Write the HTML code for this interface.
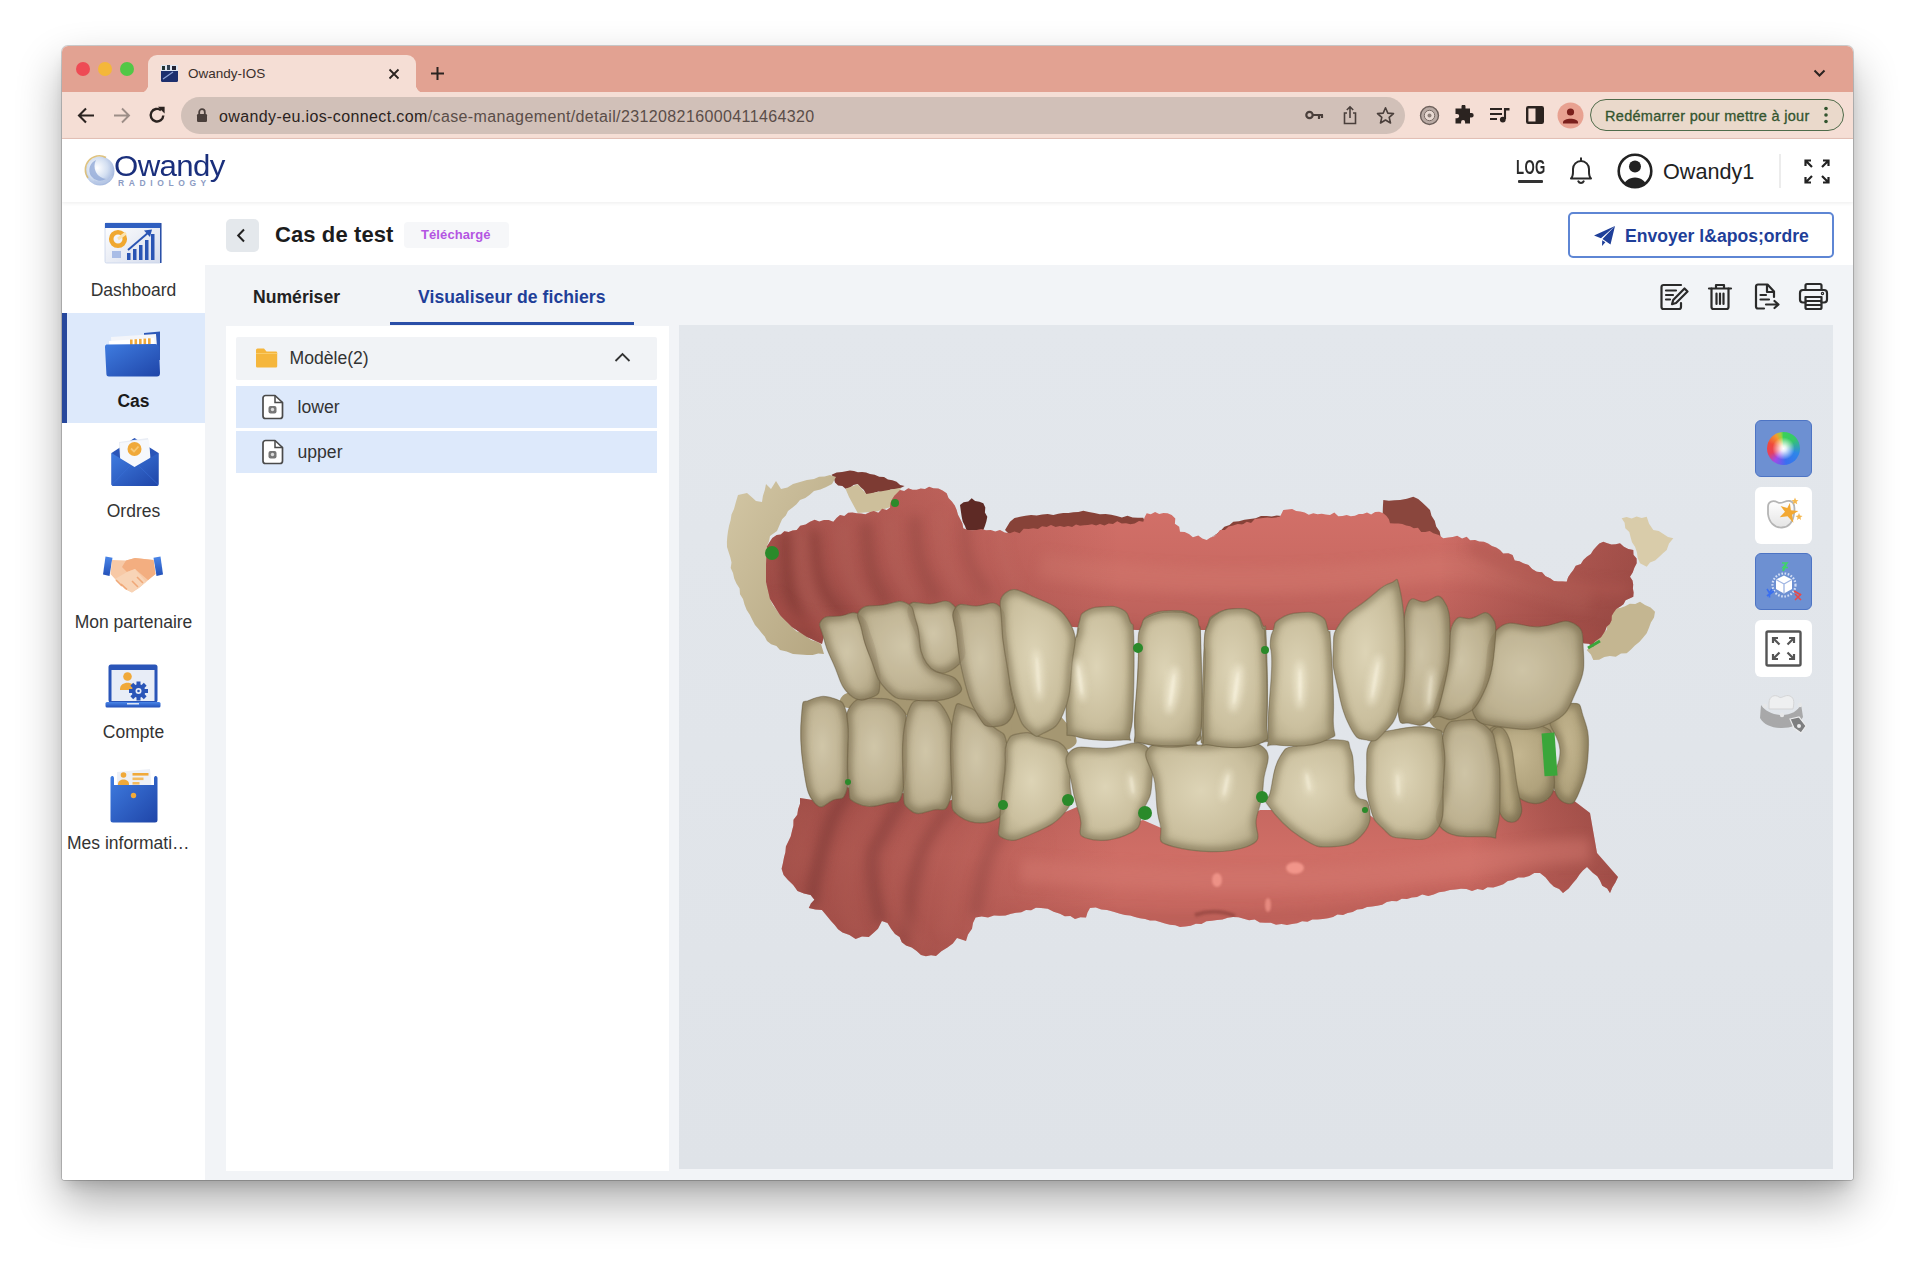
<!DOCTYPE html>
<html lang="fr">
<head>
<meta charset="utf-8">
<title>Owandy-IOS</title>
<style>
*{box-sizing:border-box;margin:0;padding:0}
html,body{width:1920px;height:1266px;overflow:hidden;background:#fff}
body{font-family:"Liberation Sans",Arial,sans-serif;color:#222;position:relative}
.abs{position:absolute}
#win{position:absolute;left:62px;top:46px;width:1791px;height:1134px;background:#fff;border-radius:6px 6px 3px 3px;
 box-shadow:0 0 0 1px rgba(0,0,0,.18),0 22px 45px 0 rgba(0,0,0,.32),0 8px 14px -4px rgba(0,0,0,.15);overflow:hidden}
/* ---- browser chrome ---- */
#tabbar{position:absolute;left:0;top:0;width:100%;height:47px;background:#e2a292}
#tab{position:absolute;left:86px;top:9px;width:268px;height:38px;background:#f5ded5;border-radius:9px 9px 0 0}
#tab:before,#tab:after{content:"";position:absolute;bottom:0;width:9px;height:9px}
#tab:before{left:-9px;background:radial-gradient(circle at 0 0,rgba(0,0,0,0) 9px,#f5ded5 9.5px)}
#tab:after{right:-9px;background:radial-gradient(circle at 100% 0,rgba(0,0,0,0) 9px,#f5ded5 9.5px)}
.tl{position:absolute;top:16px;width:14px;height:14px;border-radius:50%}
#toolbar{position:absolute;left:0;top:46px;width:100%;height:47px;background:#f5ded5;border-bottom:1px solid #e6c3b8}
#omni{position:absolute;left:119px;top:5px;width:1224px;height:37px;border-radius:19px;background:#d1c0b8}
#url{position:absolute;left:38px;top:10.5px;font-size:16px;color:#5a4d48;white-space:nowrap;letter-spacing:.38px}
#url b{font-weight:normal;color:#2b2320}
#pill{position:absolute;left:1528px;top:7px;width:254px;height:32px;border-radius:16px;border:1.5px solid #4f6b4a;background:#ead9cb}
#pill span{position:absolute;left:14px;top:7.5px;letter-spacing:.3px;font-size:14.5px;color:#33552f;white-space:nowrap;-webkit-text-stroke:.3px #33552f}
/* ---- app ---- */
#app{position:absolute;left:0;top:93px;width:1791px;height:1041px;background:#f2f4f7}
#hdr{position:absolute;left:0;top:0;width:100%;height:63px;background:#fff;box-shadow:0 1px 4px rgba(0,0,0,.08);z-index:3}
#side{position:absolute;left:0;top:63px;width:143px;height:978px;background:#fff;z-index:2}
.nav{position:absolute;left:0;width:143px;height:110.6px;text-align:center}
.nav .lb{position:absolute;left:0;width:143px;top:78px;font-size:17.5px;color:#333;white-space:nowrap}
.nav.act{background:#dde9fb}
.nav.act:before{content:"";position:absolute;left:0;top:0;width:5px;height:100%;background:#27489c}
.nav.act .lb{font-weight:bold;color:#1a1a1a}
.nav svg{position:absolute}
#titlerow{position:absolute;left:143px;top:63px;width:1648px;height:63px;background:#fff}
#fpanel{position:absolute;left:164px;top:187px;width:443px;height:845px;background:#fff}
#viewer{position:absolute;left:617px;top:186px;width:1154px;height:844px;background:linear-gradient(#e3e7ec,#dfe3e8);overflow:hidden}
.vbtn{position:absolute;left:1076px;width:57px;height:57px;border-radius:6px;background:#fff}
.vbtn.on{background:#6d90d2;border:1.5px solid #4d74c4}
</style>
</head>
<body>
<div id="win">
 <!-- TABBAR -->
 <div id="tabbar">
  <div class="tl" style="left:14px;background:#ee4b55"></div>
  <div class="tl" style="left:36px;background:#f4b73a"></div>
  <div class="tl" style="left:58px;background:#52c746"></div>
  <div id="tab">
   <svg class="abs" style="left:13px;top:10px" width="17" height="17" viewBox="0 0 17 17"><rect x="0" y="0" width="17" height="17" rx="1.5" fill="#1d2f6e"/><rect x="0" y="0" width="17" height="6" fill="#dfe6f3"/><rect x="1" y="1" width="3" height="4" fill="#233"/><rect x="6" y="0" width="3" height="5" fill="#345"/><rect x="11" y="1" width="4" height="4" fill="#223"/><path d="M2 14 L12 7" stroke="#8fa4d8" stroke-width="1.2"/></svg>
   <div class="abs" style="left:40px;top:11px;font-size:13.5px;color:#3b2f2b;white-space:nowrap">Owandy-IOS</div>
   <svg class="abs" style="left:240px;top:13px" width="12" height="12" viewBox="0 0 12 12"><path d="M1.5 1.5 L10.5 10.5 M10.5 1.5 L1.5 10.5" stroke="#2b2320" stroke-width="1.8"/></svg>
  </div>
  <svg class="abs" style="left:368px;top:20px" width="15" height="15" viewBox="0 0 15 15"><path d="M7.5 1 V14 M1 7.5 H14" stroke="#2b2320" stroke-width="2"/></svg>
  <svg class="abs" style="left:1751px;top:23px" width="13" height="9" viewBox="0 0 13 9"><path d="M1.5 1.5 L6.5 6.5 L11.5 1.5" fill="none" stroke="#2b2320" stroke-width="2"/></svg>
 </div>
 <!-- TOOLBAR -->
 <div id="toolbar">
  <svg class="abs" style="left:15px;top:15px" width="18" height="17" viewBox="0 0 18 17"><path d="M17 8.5 H2.5 M9 1.5 L2 8.5 L9 15.5" fill="none" stroke="#2b2320" stroke-width="2.1"/></svg>
  <svg class="abs" style="left:51px;top:15px" width="18" height="17" viewBox="0 0 18 17"><path d="M1 8.5 H15.5 M9 1.5 L16 8.5 L9 15.5" fill="none" stroke="#9c8d87" stroke-width="1.9"/></svg>
  <svg class="abs" style="left:86px;top:14px" width="18" height="18" viewBox="0 0 18 18"><path d="M15.3 9.5 A6.3 6.3 0 1 1 13 4.300" fill="none" stroke="#2b2320" stroke-width="2.400"/><path d="M9.800 .8 H16.600 V7.600 Z" fill="#2b2320"/></svg>
  <div id="omni">
   <svg class="abs" style="left:15px;top:11px" width="12" height="15" viewBox="0 0 12 15"><rect x="1" y="6" width="10" height="8" rx="1.2" fill="#4a3f3b"/><path d="M3.2 6 V4 A2.8 2.8 0 0 1 8.8 4 V6" fill="none" stroke="#4a3f3b" stroke-width="1.8"/></svg>
   <div id="url"><b>owandy-eu.ios-connect.com</b>/case-management/detail/231208216000411464320</div>
   <!-- key -->
   <svg class="abs" style="left:1124px;top:12px" width="19" height="13" viewBox="0 0 19 13"><circle cx="4.5" cy="6" r="3.2" fill="none" stroke="#4a3f3b" stroke-width="2.2"/><path d="M8 6 H18 M14 6 V10 M17 6 V9" stroke="#4a3f3b" stroke-width="2.2" fill="none"/></svg>
   <!-- share -->
   <svg class="abs" style="left:1162px;top:8px" width="14" height="20" viewBox="0 0 14 20"><path d="M4 8 H1.5 V18.5 H12.5 V8 H10" fill="none" stroke="#4a3f3b" stroke-width="1.6"/><path d="M7 13 V2 M3.8 5 L7 1.8 L10.2 5" fill="none" stroke="#4a3f3b" stroke-width="1.6"/></svg>
   <!-- star -->
   <svg class="abs" style="left:1195px;top:9px" width="19" height="19" viewBox="0 0 19 19"><path d="M9.5 1.8 L11.8 7.1 L17.5 7.6 L13.2 11.4 L14.5 17 L9.5 14 L4.5 17 L5.8 11.4 L1.5 7.6 L7.2 7.1 Z" fill="none" stroke="#4a3f3b" stroke-width="1.6" stroke-linejoin="round"/></svg>
  </div>
  <!-- ext icons -->
  <svg class="abs" style="left:1357px;top:13px" width="21" height="21" viewBox="0 0 21 21"><circle cx="10.5" cy="10.5" r="9" fill="#b9aaa4" stroke="#6d605b" stroke-width="1.4"/><circle cx="10.5" cy="10.5" r="5.2" fill="#e9dad3" stroke="#7a6c66" stroke-width="1"/><circle cx="10.5" cy="10.5" r="2" fill="#8d7f79"/></svg>
  <svg class="abs" style="left:1392px;top:13px" width="20" height="20" viewBox="0 0 20 20"><path d="M8 1.5 a2 2 0 0 1 4 0 V3.5 H16.5 V8 H18 a2 2 0 0 1 0 4.4 H16.5 V18.5 H11.6 V17 a2 2 0 0 0 -4 0 V18.5 H2 V13.2 H3.6 a2 2 0 0 0 0 -4.2 H2 V3.5 H8 Z" fill="#2b2320" transform="translate(-.5,0)"/></svg>
  <svg class="abs" style="left:1427px;top:14px" width="21" height="18" viewBox="0 0 21 18"><path d="M1 3 H13 M1 8 H13 M1 13 H8" stroke="#2b2320" stroke-width="2.1"/><path d="M16 2 V13" stroke="#2b2320" stroke-width="2.1"/><path d="M16 2 H20.5 V4.6 H16" fill="#2b2320"/><circle cx="13.8" cy="13.6" r="2.9" fill="#2b2320"/></svg>
  <svg class="abs" style="left:1464px;top:14px" width="18" height="18" viewBox="0 0 18 18"><rect x="1.2" y="1.2" width="15.6" height="15.6" rx="1" fill="none" stroke="#2b2320" stroke-width="2.4"/><rect x="9.5" y="1.2" width="7.3" height="15.6" fill="#2b2320"/></svg>
  <svg class="abs" style="left:1495px;top:10px" width="27" height="27" viewBox="0 0 27 27"><circle cx="13.5" cy="13.5" r="13" fill="#e8a191"/><circle cx="13.5" cy="10" r="3.6" fill="#7a1f1c"/><path d="M6 20.5 C6 15.5 21 15.5 21 20.5 V21.5 H6 Z" fill="#7a1f1c"/></svg>
  <div id="pill"><span>Redémarrer pour mettre à jour</span>
   <svg class="abs" style="left:232px;top:6px" width="6" height="18" viewBox="0 0 6 18"><circle cx="3" cy="2.5" r="1.8" fill="#33552f"/><circle cx="3" cy="9" r="1.8" fill="#33552f"/><circle cx="3" cy="15.5" r="1.8" fill="#33552f"/></svg>
  </div>
 </div>
 <!-- APP -->
 <div id="app">
  <div id="hdr">
   <svg class="abs" style="left:20px;top:13px" width="36" height="36" viewBox="0 0 36 36">
    <defs><radialGradient id="orb" cx=".4" cy=".4" r=".6"><stop offset="0" stop-color="#fff"/><stop offset=".6" stop-color="#cfdcf0"/><stop offset="1" stop-color="#9fb4dc"/></radialGradient></defs>
    <circle cx="18" cy="19" r="14.5" fill="url(#orb)" opacity=".9"/>
    <path d="M6 26 A14 14 0 0 1 24 5.5" fill="none" stroke="#d9b86a" stroke-width="1.6" opacity=".85"/>
    <path d="M9 24 A11 11 0 0 1 14 8 A13 13 0 0 0 24 27 A11 11 0 0 1 9 24Z" fill="#8ea6d6" opacity=".75"/>
    <path d="M12 29 A13 13 0 0 0 30 24" fill="none" stroke="#b8c8e6" stroke-width="2" opacity=".8"/>
   </svg>
   <div class="abs" style="left:51.5px;top:9.5px;font-size:30px;color:#1a2f7c;letter-spacing:-.6px;transform-origin:0 0;transform:scale(1.04,1);white-space:nowrap">Owandy</div>
   <div class="abs" style="left:56px;top:39px;font-size:8.5px;color:#8c9bc3;letter-spacing:4.6px;white-space:nowrap;font-weight:bold">RADIOLOGY</div>
   <!-- LOG -->
   <div class="abs" style="left:1454px;top:18px;font-size:20px;line-height:20px;font-weight:bold;color:#2a2a2a;transform-origin:0 0;transform:scale(.66,1);white-space:nowrap;letter-spacing:.5px">LOG</div>
   <div class="abs" style="left:1456px;top:41px;width:25px;height:3px;background:#333;border-radius:1px"></div>
   <!-- bell -->
   <svg class="abs" style="left:1506px;top:17px" width="26" height="29" viewBox="0 0 26 29"><path d="M13 2.2 V4 M3 22.5 H23 C20.5 20 21 17 21 13 A8 8 0 0 0 5 13 C5 17 5.500 20 3 22.500 Z" fill="none" stroke="#2a2a2a" stroke-width="2" stroke-linejoin="round" stroke-linecap="round"/><path d="M10.3 25.3 A3 3 0 0 0 15.7 25.300" fill="none" stroke="#2a2a2a" stroke-width="2" stroke-linecap="round"/></svg>
   <!-- avatar -->
   <svg class="abs" style="left:1554px;top:13px" width="38" height="38" viewBox="0 0 38 38"><defs><clipPath id="avc"><circle cx="19" cy="19" r="16.3"/></clipPath></defs><circle cx="19" cy="19" r="16.3" fill="#fff" stroke="#222" stroke-width="2.6"/><circle cx="19" cy="14.5" r="6" fill="#222"/><path d="M7.5 36 C7.500 22 30.500 22 30.500 36 Z" fill="#222" clip-path="url(#avc)"/></svg>
   <div class="abs" style="left:1601px;top:20px;font-size:21.6px;line-height:25px;color:#222;white-space:nowrap">Owandy1</div>
   <div class="abs" style="left:1717px;top:15px;width:2px;height:34px;background:#ececec"></div>
   <!-- fullscreen -->
   <svg class="abs" style="left:1742px;top:20px" width="26" height="25" viewBox="0 0 26 25"><g fill="none" stroke="#222" stroke-width="2.2"><path d="M1.500 7 V1.500 H7 M2 2 L8 8"/><path d="M24.500 7 V1.500 H19 M24 2 L18 8"/><path d="M1.500 18 V23.500 H7 M2 23 L8 17"/><path d="M24.500 18 V23.500 H19 M24 23 L18 17"/></g></svg>
</div>
  <div id="side">
   <svg width="0" height="0" style="position:absolute"><defs>
    <linearGradient id="gb" x1="0" y1="0" x2="1" y2="1"><stop offset="0" stop-color="#3f7ce0"/><stop offset="1" stop-color="#1f45a8"/></linearGradient>
    <linearGradient id="gb2" x1="0" y1="0" x2="0" y2="1"><stop offset="0" stop-color="#4a86e8"/><stop offset="1" stop-color="#2350b8"/></linearGradient>
    <linearGradient id="gw" x1="0" y1="0" x2="1" y2="1"><stop offset="0" stop-color="#ffffff"/><stop offset="1" stop-color="#d5dcec"/></linearGradient>
   </defs></svg>
   <div class="nav" style="top:0.0px"><svg style="left:42px;top:20px" width="58" height="42" viewBox="0 0 58 42"><rect x="1" y="1" width="56" height="40" rx="1.500" fill="url(#gw)" stroke="#c8d3ea" stroke-width=".8"/><rect x="1" y="1" width="56" height="5" fill="#2f5fc0"/><rect x="56" y="1" width="1.500" height="40" fill="#2a50a8"/><circle cx="14" cy="17" r="6.800" fill="none" stroke="#f0a830" stroke-width="4.600"/><path d="M14 17 L22 11" stroke="#fbe3b0" stroke-width="3"/><rect x="8" y="29" width="9" height="7" fill="#a9bde6"/><g fill="#2a55b4"><rect x="23" y="31" width="3.500" height="7"/><rect x="29" y="27" width="3.500" height="11"/><rect x="35" y="23" width="3.500" height="15"/><rect x="41" y="18" width="3.500" height="20"/><rect x="47" y="12" width="3.500" height="26"/></g><path d="M24 28 L45 10" stroke="#2a55b4" stroke-width="2"/><path d="M40 8.500 L48 7.500 L46 15 Z" fill="#2a55b4"/></svg><div class="lb">Dashboard</div></div>
   <div class="nav act" style="top:110.6px"><svg style="left:42px;top:17px" width="58" height="48" viewBox="0 0 58 48"><path d="M40 3 L56 1.500 L56 30 L40 30 Z" fill="#2c58b8"/><path d="M7 7 L52 4 L54 30 L8 30 Z" fill="#f3f5fa"/><path d="M5 11 L50 8 L52 30 L6 30 Z" fill="#ffffff"/><g fill="#f0a93a"><rect x="26" y="9.500" width="2.600" height="6"/><rect x="30.500" y="9.200" width="2.600" height="6"/><rect x="35" y="8.900" width="2.600" height="6"/><rect x="39.500" y="8.600" width="2.600" height="6"/><rect x="44" y="8.300" width="2.600" height="6"/></g><path d="M1 17 C1 15 2 14.500 3.500 14.500 L50 14 C54 14 55 16 55 18 L56 43 C56 45.500 55 46.500 53 46.500 L5 46.500 C3 46.500 2.500 45.500 2.400 44 Z" fill="url(#gb)"/></svg><div class="lb">Cas</div></div>
   <div class="nav" style="top:221.2px"><svg style="left:48px;top:13px" width="50" height="52" viewBox="0 0 50 52"><path d="M1.500 17 L24.500 2 L48.500 17 V48 A2 2 0 0 1 46.500 50 H3.500 A2 2 0 0 1 1.500 48 Z" fill="#2a55b8"/><path d="M9 6 L38 2 L41 33 L11 36 Z" fill="#e9edf5"/><path d="M10 7 L39 3.500 L41 30 L11 33 Z" fill="#f6f8fc"/><circle cx="24.500" cy="13" r="7" fill="#f0a93a"/><path d="M21 12.500 L24 15.500 L28.500 10.500" fill="none" stroke="#f7c976" stroke-width="1.800"/><path d="M1.500 17 L24.500 31 L48.500 17 V48 A2 2 0 0 1 46.500 50 H3.500 A2 2 0 0 1 1.500 48 Z" fill="url(#gb)"/><path d="M1.500 49 L20 30 M48.500 49 L29 30" stroke="#3a6fd6" stroke-width="1" opacity=".6"/></svg><div class="lb">Ordres</div></div>
   <div class="nav" style="top:331.8px"><svg style="left:40px;top:21px" width="62" height="40" viewBox="0 0 62 40"><path d="M3.500 1.500 L10.500 2.800 L7.500 21 L1 19.500 Z" fill="url(#gb2)"/><path d="M51.500 2.800 L58.500 1.500 L61 19.500 L54.500 21 Z" fill="url(#gb2)"/><path d="M10 5 L24 5.500 L33 3 L42 4 L51.500 5 L53.500 19 L44 27 L37 33 L30 37.500 L23 34 L13 24 L8.500 19 Z" fill="#f7c9a6"/><path d="M24 5.500 L33 3 L51.500 5 L53.500 19 L46 25 L33 14 L25 17 L20 12 Z" fill="#f3ae80"/><path d="M13 24 L25 17 L33 14 L44 27 L30 37.500 L23 34 Z" fill="#f8d4b6"/><path d="M14 25 L20 31 M19 29 L25 34.500 M36 32 L30 26 M41 28 L35 22" stroke="#f0a878" stroke-width="1.600"/></svg><div class="lb">Mon partenaire</div></div>
   <div class="nav" style="top:442.4px"><svg style="left:42px;top:19px" width="58" height="46" viewBox="0 0 58 46"><rect x="4.500" y="1.500" width="49" height="38" rx="2.500" fill="#2a55b8"/><rect x="7.500" y="7" width="43" height="31" fill="#e8edf7"/><rect x="1.500" y="39" width="55" height="5.500" rx="1.500" fill="url(#gb2)"/><path d="M23 40 H35 V41.500 H23 Z" fill="#dfe6f4"/><circle cx="23.500" cy="13.500" r="4.300" fill="#f0a93a"/><path d="M16 26 C16 17.500 31 17.500 31 26 V27 H16 Z" fill="#f0a93a"/><g transform="translate(34.500,28)"><circle r="6.800" fill="#2a55b8"/><g fill="#2a55b8"><rect x="-2" y="-9.500" width="4" height="19"/><rect x="-2" y="-9.500" width="4" height="19" transform="rotate(45)"/><rect x="-2" y="-9.500" width="4" height="19" transform="rotate(90)"/><rect x="-2" y="-9.500" width="4" height="19" transform="rotate(135)"/></g><circle r="3" fill="#e8edf7"/><circle r="1.300" fill="#2a55b8"/></g></svg><div class="lb">Compte</div></div>
   <div class="nav" style="top:553.0px"><svg style="left:47px;top:13px" width="50" height="56" viewBox="0 0 50 56"><path d="M8 4 L41 1 L43 24 L8 24 Z" fill="#edf0f6"/><circle cx="14.500" cy="7" r="2.800" fill="#f0a93a"/><path d="M9 16 C9 10 20 10 20 16 V17 H9 Z" fill="#f0a93a"/><rect x="23.500" y="5" width="16" height="2.600" fill="#f0a93a"/><rect x="23.500" y="9.500" width="11" height="2.600" fill="#f3bb60"/><rect x="23.500" y="14" width="7" height="2.600" fill="#f3bb60"/><path d="M1.500 10 C1.500 8 4.500 7 5 10 L5 17 H45 L45 10 C45.500 7 48.500 8 48.500 10 V52 A2.500 2.500 0 0 1 46 54.500 H4 A2.500 2.500 0 0 1 1.500 52 Z" fill="url(#gb)"/><circle cx="24.500" cy="27.500" r="2.700" fill="#f0a93a"/></svg><div class="lb" style="left:5px;width:133px;text-align:left;overflow:hidden">Mes informati…</div></div>
</div>
  <div id="titlerow">
   <div class="abs" style="left:21px;top:17px;width:33px;height:33px;border-radius:5px;background:#e4e8ec"></div>
   <svg class="abs" style="left:31px;top:26px" width="10" height="15" viewBox="0 0 10 15"><path d="M8 1.500 L2.200 7.500 L8 13.500" fill="none" stroke="#222" stroke-width="2"/></svg>
   <div class="abs" style="left:70px;top:20px;font-size:22px;line-height:26px;font-weight:bold;color:#1c1c1c;white-space:nowrap;letter-spacing:.1px">Cas de test</div>
   <div class="abs" style="left:199px;top:20px;width:105px;height:26px;border-radius:4px;background:#f6f7f9"></div>
   <div class="abs" style="left:216px;top:25px;font-size:13px;line-height:16px;font-weight:bold;color:#b455e2;white-space:nowrap;letter-spacing:.1px">Téléchargé</div>
   <div class="abs" style="left:1363px;top:10px;width:266px;height:46px;border-radius:5px;border:2px solid #5e86d4;background:#fff"></div>
   <svg class="abs" style="left:1388px;top:23px" width="23" height="22" viewBox="0 0 23 22"><path d="M22 1 L1 10.500 L8 13.200 Z M22 1 L9.500 14 L17.500 19.500 Z M9.200 15.200 L9 21 L12.400 17.300 Z" fill="#1f3f99"/></svg>
   <div class="abs" style="left:1420px;top:23px;font-size:17.6px;line-height:22px;font-weight:bold;color:#1f3f99;white-space:nowrap">Envoyer l&amp;apos;ordre</div>
</div>
  
  <div class="abs" style="left:191px;top:147px;font-size:17.6px;line-height:22px;font-weight:bold;color:#222;white-space:nowrap">Numériser</div>
  <div class="abs" style="left:356px;top:147px;font-size:17.6px;line-height:22px;font-weight:bold;color:#1f3f99;white-space:nowrap;letter-spacing:.05px">Visualiseur de fichiers</div>
  <div class="abs" style="left:328px;top:183px;width:244px;height:3px;background:#2a4fa8;z-index:2"></div>
  <!-- action icons -->
  <svg class="abs" style="left:1597px;top:143px" width="30" height="29" viewBox="0 0 30 29"><g fill="none" stroke="#2a2a2a" stroke-width="2.2" stroke-linejoin="round" stroke-linecap="round"><path d="M22 3 H4.500 A2 2 0 0 0 2.500 5 V25 A2 2 0 0 0 4.500 27 H20 A2 2 0 0 0 22 25 V21"/><path d="M7 8.500 H17 M7 13 H14 M7 17.500 H11"/><path d="M25.500 6.500 L28.500 9.500 L17 21 L13 22.200 L14.200 18 Z"/></g></svg>
  <svg class="abs" style="left:1645px;top:143px" width="26" height="29" viewBox="0 0 26 29"><g fill="none" stroke="#2a2a2a" stroke-width="2.2" stroke-linejoin="round" stroke-linecap="round"><path d="M2 6.500 H24 M9 6 V3 H17 V6"/><path d="M4.500 6.500 V25 A2 2 0 0 0 6.500 27 H19.500 A2 2 0 0 0 21.500 25 V6.500"/><path d="M9.500 11.500 V22 M13 11.500 V22 M16.500 11.500 V22"/></g></svg>
  <svg class="abs" style="left:1691px;top:143px" width="28" height="29" viewBox="0 0 28 29"><g fill="none" stroke="#2a2a2a" stroke-width="2.2" stroke-linejoin="round" stroke-linecap="round"><path d="M21 15 V9.500 L14.500 2.500 H5 A2 2 0 0 0 3 4.500 V24.500 A2 2 0 0 0 5 26.500 H11"/><path d="M14 3 V10 H20.500"/><path d="M7.500 13 H13 M7.500 17.500 H16 M13 22.500 H25 M21.500 19 L25.500 22.500 L21.500 26"/></g></svg>
  <svg class="abs" style="left:1736px;top:143px" width="31" height="29" viewBox="0 0 31 29"><g fill="none" stroke="#2a2a2a" stroke-width="2.2" stroke-linejoin="round" stroke-linecap="round"><path d="M7.500 8 V3.500 A1.500 1.500 0 0 1 9 2 H22 A1.500 1.500 0 0 1 23.500 3.500 V8"/><path d="M7.500 20.500 H5 A3 3 0 0 1 2 17.500 V11 A3 3 0 0 1 5 8 H26 A3 3 0 0 1 29 11 V17.500 A3 3 0 0 1 26 20.500 H23.500"/><path d="M7.500 15 H23.500 V25.500 A1.500 1.500 0 0 1 22 27 H9 A1.500 1.500 0 0 1 7.500 25.500 Z M7.500 19 H23.500 M7.500 23 H23.500"/><circle cx="24.500" cy="11.500" r=".6"/></g></svg>

  <div id="fpanel">
   <div class="abs" style="left:10px;top:11px;width:421px;height:43px;background:#f1f3f6;border-radius:2px"></div>
   <svg class="abs" style="left:29px;top:21px" width="23" height="22" viewBox="0 0 23 22"><path d="M1 3 A1.500 1.500 0 0 1 2.500 1.500 H9 L11.500 4.500 H21 A1.200 1.200 0 0 1 22.200 5.700 V19.300 A1.200 1.200 0 0 1 21 20.500 H2.200 A1.200 1.200 0 0 1 1 19.300 Z" fill="#f5b63c"/><path d="M1 6.500 H22.200" stroke="#f9cc6a" stroke-width="1"/></svg>
   <div class="abs" style="left:63.500px;top:21px;font-size:17.6px;line-height:22px;color:#333;white-space:nowrap">Modèle(2)</div>
   <svg class="abs" style="left:388px;top:26px" width="17" height="11" viewBox="0 0 17 11"><path d="M1.500 9 L8.500 2 L15.500 9" fill="none" stroke="#333" stroke-width="1.800"/></svg>
   <div class="abs" style="left:10px;top:60px;width:421px;height:42px;background:#dde9fb"></div>
   <div class="abs" style="left:10px;top:104.500px;width:421px;height:42.500px;background:#dde9fb"></div>
   <svg class="abs" style="left:35px;top:68px" width="23" height="26" viewBox="0 0 23 26"><path d="M4.500 1.500 H14 L21.500 8.500 V22 A2.500 2.500 0 0 1 19 24.500 H4.500 A2.500 2.500 0 0 1 2 22 V4 A2.500 2.500 0 0 1 4.500 1.500 Z" fill="#fff" stroke="#4a4a4a" stroke-width="1.700" stroke-linejoin="round"/><path d="M14 1.500 V8.500 H21.500" fill="none" stroke="#4a4a4a" stroke-width="1.500"/><rect x="7.500" y="12" width="8" height="7.500" rx="2" fill="#777"/><circle cx="11.500" cy="15.500" r="1.700" fill="#ddd"/></svg>
   <svg class="abs" style="left:35px;top:112.500px" width="23" height="26" viewBox="0 0 23 26"><path d="M4.500 1.500 H14 L21.500 8.500 V22 A2.500 2.500 0 0 1 19 24.500 H4.500 A2.500 2.500 0 0 1 2 22 V4 A2.500 2.500 0 0 1 4.500 1.500 Z" fill="#fff" stroke="#4a4a4a" stroke-width="1.700" stroke-linejoin="round"/><path d="M14 1.500 V8.500 H21.500" fill="none" stroke="#4a4a4a" stroke-width="1.500"/><rect x="7.500" y="12" width="8" height="7.500" rx="2" fill="#777"/><circle cx="11.500" cy="15.500" r="1.700" fill="#ddd"/></svg>
   <div class="abs" style="left:71.500px;top:70px;font-size:17.6px;line-height:22px;color:#333;white-space:nowrap">lower</div>
   <div class="abs" style="left:71.500px;top:114.500px;font-size:17.6px;line-height:22px;color:#333;white-space:nowrap">upper</div>
</div>
  <div id="viewer"><!--V0--><svg class="abs" style="left:0;top:0" width="1154" height="844" viewBox="679 325 1154 844">
<defs>
 <radialGradient id="tg" cx=".45" cy=".45" r=".75"><stop offset="0" stop-color="#ddd4b6"/><stop offset=".55" stop-color="#cbc09f"/><stop offset="1" stop-color="#a89d7b"/></radialGradient>
 <radialGradient id="tgd" cx=".45" cy=".4" r=".8"><stop offset="0" stop-color="#c4b690"/><stop offset=".6" stop-color="#b0a27c"/><stop offset="1" stop-color="#877a5a"/></radialGradient>
 <linearGradient id="ugg" x1="0" y1="0" x2="0" y2="1"><stop offset="0" stop-color="#d5726a"/><stop offset=".5" stop-color="#ca6a63"/><stop offset="1" stop-color="#b65d57"/></linearGradient>
 <linearGradient id="lgg" x1="0" y1="0" x2="0" y2="1"><stop offset="0" stop-color="#c3655e"/><stop offset=".4" stop-color="#cf6e66"/><stop offset="1" stop-color="#bf625b"/></linearGradient>
 <linearGradient id="flg" x1="0" y1="0" x2="1" y2="1"><stop offset="0" stop-color="#d3c7a5"/><stop offset="1" stop-color="#b3a47f"/></linearGradient>
 <linearGradient id="ldk" x1="0" y1="0" x2="1" y2="0"><stop offset="0" stop-color="#5a1e1a" stop-opacity=".42"/><stop offset=".55" stop-color="#5a1e1a" stop-opacity=".22"/><stop offset="1" stop-color="#5a1e1a" stop-opacity="0"/></linearGradient>
 <linearGradient id="rdk" x1="0" y1="0" x2="1" y2="0"><stop offset="0" stop-color="#5a1e1a" stop-opacity="0"/><stop offset=".5" stop-color="#5a1e1a" stop-opacity=".25"/><stop offset="1" stop-color="#5a1e1a" stop-opacity=".42"/></linearGradient>
 <filter id="b3" filterUnits="userSpaceOnUse" x="679" y="325" width="1154" height="844"><feGaussianBlur stdDeviation="3"/></filter>
 <filter id="b6" filterUnits="userSpaceOnUse" x="679" y="325" width="1154" height="844"><feGaussianBlur stdDeviation="6"/></filter>
 <filter id="b05" x="-5%" y="-5%" width="110%" height="110%"><feGaussianBlur stdDeviation="0.5"/></filter>
 <filter id="b1" filterUnits="userSpaceOnUse" x="679" y="325" width="1154" height="844"><feGaussianBlur stdDeviation="1.2"/></filter>
 <clipPath id="ugc"><path d="M766.7 546.7 L769.5 542.3 L772.3 538.0 L776.7 535.0 L780.8 534.6 L784.3 531.3 L788.7 532.1 L792.5 530.5 L796.7 530.0 L800.2 525.7 L805.6 524.5 L810.0 521.7 L814.7 519.8 L819.3 521.4 L824.0 519.9 L828.7 520.0 L833.3 521.7 L836.5 518.1 L840.0 515.0 L844.3 515.9 L848.2 512.7 L852.4 512.6 L856.7 513.3 L861.0 513.4 L865.4 514.2 L869.6 512.2 L873.8 511.0 L878.3 512.8 L882.2 508.7 L886.7 510.0 L890.1 507.5 L890.4 502.9 L892.1 499.2 L894.3 495.8 L897.1 492.9 L900.0 490.0 L904.2 491.1 L908.3 488.3 L912.5 489.7 L916.7 489.7 L920.8 488.4 L925.0 488.9 L929.1 486.8 L933.3 488.3 L938.4 488.4 L942.6 490.6 L946.7 493.3 L948.5 497.9 L951.9 501.5 L954.8 505.5 L956.7 510.0 L958.0 514.7 L960.2 519.1 L962.4 523.5 L963.3 528.3 L967.6 530.1 L972.1 530.2 L976.7 530.0 L981.3 529.0 L986.0 530.3 L990.7 530.1 L995.3 531.5 L1000.0 530.0 L1004.7 532.5 L1010.0 533.3 L1014.5 531.5 L1019.7 533.2 L1023.7 528.8 L1028.6 529.0 L1033.3 528.3 L1037.9 529.0 L1042.1 526.2 L1046.7 527.1 L1051.0 524.9 L1055.6 527.1 L1060.0 526.0 L1064.1 526.9 L1068.0 525.9 L1072.1 526.9 L1076.0 524.5 L1080.0 525.8 L1084.0 525.2 L1088.0 524.9 L1092.0 524.2 L1096.1 525.6 L1100.0 524.0 L1104.4 525.5 L1108.7 523.4 L1113.0 524.0 L1117.2 521.3 L1121.7 523.6 L1126.0 523.2 L1130.4 524.3 L1134.7 523.4 L1139.0 521.0 L1143.3 521.7 L1144.6 517.3 L1146.7 513.3 L1150.8 514.3 L1155.1 512.0 L1159.2 514.0 L1163.4 513.1 L1167.6 513.2 L1171.7 515.0 L1175.3 518.4 L1174.9 523.8 L1179.2 526.8 L1180.0 531.7 L1184.7 532.1 L1189.0 534.0 L1192.9 537.3 L1198.3 535.6 L1202.3 538.4 L1206.7 540.0 L1210.1 537.7 L1214.3 536.2 L1217.4 533.5 L1220.0 530.0 L1224.9 530.0 L1228.6 526.4 L1233.2 525.5 L1237.6 523.9 L1242.7 524.5 L1246.7 521.7 L1251.1 522.9 L1254.8 519.0 L1259.0 518.5 L1263.2 518.1 L1267.3 517.5 L1271.7 517.9 L1275.9 517.6 L1280.0 516.7 L1283.3 510.0 L1287.7 509.5 L1292.1 509.0 L1296.2 511.1 L1300.5 511.4 L1304.7 512.6 L1308.8 514.7 L1313.3 513.3 L1317.5 514.3 L1321.7 513.8 L1325.8 514.4 L1330.0 514.9 L1334.3 512.6 L1338.3 516.2 L1342.4 515.9 L1346.7 515.0 L1350.8 516.3 L1354.9 515.8 L1358.9 514.0 L1362.9 513.9 L1367.0 512.5 L1371.1 514.4 L1375.1 512.0 L1379.2 511.8 L1383.3 513.3 L1386.5 516.0 L1388.9 519.3 L1390.0 523.3 L1394.1 523.6 L1398.3 523.4 L1402.3 524.1 L1406.1 525.6 L1410.1 526.3 L1413.8 528.3 L1418.0 527.8 L1421.2 532.1 L1425.4 532.0 L1429.7 531.1 L1433.3 533.3 L1438.8 534.9 L1443.3 538.3 L1448.0 537.4 L1452.6 537.1 L1457.2 535.8 L1462.1 538.4 L1466.7 536.7 L1470.1 540.2 L1475.1 539.9 L1479.2 541.6 L1483.9 541.8 L1488.1 543.5 L1491.9 546.1 L1496.2 547.5 L1500.0 550.0 L1503.2 553.4 L1508.4 553.3 L1512.6 555.0 L1514.7 560.5 L1519.4 561.2 L1523.3 563.3 L1528.5 564.9 L1532.1 569.0 L1536.7 571.7 L1542.0 572.2 L1545.5 576.2 L1550.0 578.3 L1553.8 581.0 L1558.0 581.4 L1562.3 581.6 L1566.7 581.7 L1568.1 577.3 L1570.6 573.6 L1573.3 570.0 L1575.7 565.7 L1580.8 564.1 L1583.3 560.0 L1586.8 556.8 L1590.8 554.1 L1593.3 550.0 L1596.2 546.7 L1599.3 543.6 L1603.3 541.7 L1607.4 543.3 L1611.5 544.4 L1615.7 544.3 L1620.0 543.3 L1623.9 546.7 L1628.3 548.9 L1633.3 550.0 L1633.5 554.7 L1636.6 558.6 L1636.7 563.3 L1634.4 567.7 L1632.7 572.5 L1630.0 576.7 L1632.5 580.4 L1633.2 584.4 L1632.9 588.5 L1633.6 592.5 L1633.3 596.7 L1629.5 598.6 L1625.6 600.2 L1623.5 604.3 L1620.0 606.7 L1616.3 609.0 L1613.9 612.3 L1611.8 615.7 L1611.6 620.3 L1609.8 624.0 L1606.7 626.7 L1605.4 630.6 L1603.2 634.0 L1601.0 637.3 L1597.4 639.7 L1594.2 642.4 L1593.3 646.7 L1588.8 643.7 L1583.3 643.3 L1578.0 628.0 L1560.0 626.0 L1500.0 633.0 L1400.0 632.0 L1335.0 630.0 L1268.0 630.0 L1202.0 630.0 L1137.0 630.0 L1073.0 627.0 L1033.0 620.0 L1000.0 618.0 L917.0 618.0 L860.0 620.0 L827.0 624.0 L822.0 644.0 L807.0 637.0 L792.0 627.0 L780.0 615.0 L770.0 599.0 L766.0 582.0 L766.0 564.0 L767.0 546.0Z"/></clipPath>
 <clipPath id="lgc"><path d="M800.0 798.0 L813.0 800.0 L847.0 787.0 L875.0 797.0 L903.0 793.0 L928.0 805.0 L952.0 800.0 L975.0 812.0 L1000.0 810.0 L1035.0 825.0 L1077.0 807.0 L1110.0 830.0 L1143.0 820.0 L1200.0 845.0 L1260.0 810.0 L1273.0 810.0 L1320.0 845.0 L1367.0 813.0 L1400.0 838.0 L1440.0 817.0 L1447.0 817.0 L1475.0 832.0 L1497.0 807.0 L1513.0 813.0 L1517.0 790.0 L1547.0 800.0 L1553.0 790.0 L1573.0 800.0 L1590.0 813.0 L1597.0 853.0 L1618.0 877.0 L1618.0 877.0 L1615.4 882.4 L1612.3 887.5 L1610.0 893.0 L1607.2 888.5 L1602.3 885.8 L1600.1 880.7 L1597.3 876.3 L1593.0 873.0 L1587.0 867.0 L1582.9 870.5 L1579.5 874.5 L1576.5 879.0 L1573.0 883.0 L1568.6 888.6 L1563.0 893.0 L1559.2 889.0 L1554.0 886.7 L1550.0 883.0 L1545.6 877.4 L1540.0 873.0 L1534.3 873.1 L1529.3 876.1 L1523.9 877.5 L1518.1 877.4 L1513.0 880.0 L1507.8 881.1 L1503.3 884.2 L1498.3 886.0 L1493.3 887.6 L1487.6 887.3 L1483.0 890.0 L1477.5 889.1 L1472.0 891.0 L1466.5 889.1 L1461.0 888.7 L1455.5 889.6 L1450.0 890.0 L1444.6 891.6 L1439.0 892.2 L1433.7 894.5 L1428.3 896.0 L1422.2 894.5 L1417.0 897.0 L1411.9 897.6 L1407.0 898.9 L1401.8 898.8 L1397.0 901.2 L1391.8 901.0 L1386.8 902.1 L1382.2 904.8 L1377.1 905.7 L1372.1 906.6 L1367.0 907.0 L1362.3 909.1 L1357.2 909.6 L1352.6 911.9 L1347.6 912.9 L1343.0 915.1 L1337.5 914.5 L1333.0 917.0 L1328.0 918.3 L1322.8 918.9 L1317.6 919.4 L1312.4 919.4 L1307.5 921.7 L1302.1 921.2 L1297.2 923.2 L1292.1 924.0 L1287.0 925.0 L1281.6 924.1 L1276.0 924.7 L1270.8 922.8 L1265.3 922.7 L1259.8 922.4 L1254.7 919.4 L1249.1 920.3 L1243.8 918.7 L1238.5 917.2 L1233.0 917.0 L1227.7 917.8 L1222.5 919.5 L1217.1 919.9 L1211.8 920.8 L1206.4 921.2 L1201.4 924.1 L1195.9 923.8 L1190.7 925.7 L1185.4 926.6 L1180.0 927.0 L1175.2 925.2 L1170.0 924.8 L1165.0 923.5 L1160.2 921.9 L1155.2 920.4 L1150.0 920.6 L1145.1 919.0 L1140.0 918.2 L1135.0 917.1 L1130.1 915.5 L1125.0 915.0 L1120.0 913.8 L1113.5 911.8 L1107.0 910.0 L1101.3 909.4 L1095.8 907.4 L1090.0 908.0 L1087.5 912.5 L1086.0 917.5 L1080.4 917.2 L1075.0 919.0 L1070.4 916.1 L1064.8 916.2 L1060.0 913.8 L1053.7 911.7 L1047.7 908.7 L1041.0 908.0 L1035.9 907.7 L1031.1 910.3 L1026.0 910.0 L1021.3 912.3 L1016.0 912.7 L1011.0 913.8 L1005.5 915.6 L999.7 915.7 L994.0 915.6 L988.0 917.4 L981.7 916.4 L975.6 917.5 L973.0 922.9 L972.0 928.8 L968.0 934.4 L966.0 941.0 L957.0 938.0 L952.9 943.4 L947.5 947.5 L941.4 951.3 L936.0 956.0 L931.0 955.2 L925.9 956.3 L921.0 955.0 L916.6 951.0 L911.7 947.6 L906.0 945.6 L901.8 942.3 L899.6 937.0 L895.0 934.0 L891.0 928.7 L887.5 923.0 L881.9 921.0 L878.0 928.8 L873.4 932.9 L868.8 937.0 L862.0 936.6 L855.6 939.0 L849.5 934.9 L842.5 932.5 L838.0 929.3 L834.7 925.0 L831.0 921.0 L826.5 915.5 L821.9 910.0 L815.3 909.4 L808.8 908.0 L810.9 903.4 L814.4 899.7 L810.6 895.0 L803.9 893.5 L797.5 891.0 L793.2 885.1 L788.0 880.0 L783.6 875.1 L781.6 868.8 L782.9 863.2 L784.0 857.5 L785.4 852.2 L785.9 846.5 L788.3 841.5 L790.7 836.4 L792.0 831.0 L793.4 825.5 L793.5 819.7 L797.3 814.8 L798.1 809.2 L800.0 803.8 L800.0 798.0Z"/></clipPath>
</defs>
<path d="M831.6 474.8 L836.6 472.6 L842.0 472.0 L846.0 471.2 L849.9 470.4 L854.0 471.0 L857.9 472.3 L862.1 472.0 L866.1 472.5 L870.0 474.0 L874.7 474.8 L879.2 476.8 L884.0 477.0 L887.9 479.4 L892.4 480.2 L896.6 481.8 L900.1 485.0 L904.6 486.0 L899.0 488.7 L894.9 489.2 L890.7 489.6 L886.8 491.5 L882.6 492.2 L878.3 491.6 L874.3 492.8 L870.3 494.2 L866.0 494.0 L863.9 490.1 L860.7 487.2 L857.7 484.0 L853.4 485.0 L849.9 487.9 L845.5 488.7 L842.4 486.1 L838.1 485.4 L835.0 482.6 L834.0 478.4 L831.6 474.8Z" fill="#7d3b33"/>
<path d="M738.0 495.0 L747.0 493.0 L751.6 496.9 L756.0 501.0 L762.0 502.0 L762.9 495.9 L764.8 490.0 L766.0 484.0 L771.0 489.0 L776.0 481.0 L781.0 489.0 L787.4 487.5 L793.0 484.0 L800.0 482.0 L806.9 479.9 L814.0 479.0 L819.1 476.7 L824.7 476.4 L830.0 475.0 L836.0 477.0 L832.0 484.0 L826.2 487.0 L820.4 489.6 L814.0 491.0 L809.8 494.7 L805.3 498.0 L800.0 500.0 L796.5 504.2 L792.3 507.7 L788.0 511.0 L785.8 515.6 L782.1 519.3 L780.0 524.0 L777.0 531.0 L770.0 536.0 L769.0 541.2 L767.0 546.0 L766.7 552.0 L767.2 558.0 L766.0 564.0 L766.4 570.0 L767.3 576.0 L766.0 582.0 L768.0 587.5 L769.9 593.0 L770.0 599.0 L772.8 604.7 L776.6 609.7 L780.0 615.0 L784.6 618.4 L788.0 623.0 L792.0 627.0 L796.4 631.3 L802.6 632.8 L807.0 637.0 L811.3 640.1 L816.4 641.5 L821.0 644.0 L822.5 649.0 L824.0 654.0 L818.3 653.5 L812.7 654.9 L807.0 655.0 L800.0 654.5 L793.0 654.0 L786.6 651.5 L780.0 650.0 L776.4 646.0 L771.1 644.3 L767.0 641.0 L764.7 636.5 L761.4 632.7 L758.3 628.8 L755.0 625.0 L752.4 619.9 L749.8 614.8 L746.7 609.9 L744.5 604.6 L743.0 599.0 L740.0 594.2 L739.6 588.4 L736.4 583.6 L734.2 578.5 L733.0 573.0 L730.7 568.0 L731.5 562.4 L730.3 557.2 L728.6 552.1 L727.0 547.0 L726.9 541.7 L727.3 536.4 L728.0 531.2 L729.0 526.0 L730.6 520.3 L731.5 514.4 L734.0 509.0 L735.9 502.0 L738.0 495.0Z" fill="url(#flg)"/>
<path d="M845.5 488.7 L857.7 484.3 L866.4 493.9 L901.0 487.8 L896.0 501.7 L890.7 507.0 L876.8 511.5 L857.7 513.0 L849.0 497.0Z" fill="#cdbf9b"/>
<path d="M960.0 505.0 L963.6 502.3 L968.3 501.5 L971.7 498.3 L975.1 501.0 L979.4 501.8 L983.3 503.3 L985.3 507.6 L984.9 512.5 L987.3 516.7 L986.4 521.2 L985.0 525.7 L983.3 530.0 L979.2 531.4 L975.0 530.6 L970.8 530.6 L966.7 530.7 L965.0 526.0 L962.7 521.6 L961.7 516.7 L960.8 510.8 L960.0 505.0Z" fill="#5e2a25"/>
<path d="M1005.0 530.0 L1010.0 521.7 L1014.5 518.1 L1020.0 516.7 L1025.5 515.8 L1031.1 515.1 L1036.7 515.6 L1042.2 514.5 L1047.7 514.1 L1053.3 515.0 L1058.3 513.8 L1063.2 512.9 L1068.4 513.0 L1073.3 512.2 L1078.4 512.0 L1083.3 510.7 L1088.8 511.9 L1094.4 513.0 L1099.9 514.2 L1105.6 514.0 L1111.2 514.7 L1116.7 516.0 L1121.9 517.5 L1127.4 515.8 L1132.6 517.5 L1138.0 517.7 L1143.3 517.7 L1145.0 522.8 L1143.6 528.2 L1145.0 533.3 L1139.9 532.7 L1135.0 533.6 L1130.0 533.7 L1125.0 533.8 L1120.1 535.7 L1115.0 535.1 L1110.0 535.4 L1105.0 534.9 L1100.0 536.0 L1095.0 535.1 L1090.0 535.0 L1085.0 535.4 L1080.0 534.6 L1075.0 534.9 L1070.0 534.8 L1065.0 535.8 L1060.0 535.0 L1054.7 536.3 L1049.4 536.3 L1044.0 535.9 L1038.7 536.7 L1033.3 536.0 L1027.5 534.9 L1021.7 535.4 L1015.8 534.9 L1010.0 535.0 L1005.0 530.0Z" fill="#874238"/>
<path d="M1100.0 515.0 L1120.0 518.3 L1141.7 521.7 L1141.7 531.7 L1100.0 531.7Z" fill="#874238"/>
<path d="M1208.3 539.3 L1212.6 536.6 L1216.9 533.7 L1220.8 530.5 L1224.4 526.7 L1229.5 525.1 L1233.3 521.7 L1239.0 521.2 L1244.4 519.8 L1250.0 518.9 L1255.6 518.2 L1261.0 516.1 L1266.7 516.0 L1271.7 516.5 L1276.7 515.5 L1281.7 516.0 L1276.3 518.2 L1270.7 519.1 L1264.9 519.6 L1259.6 521.9 L1253.8 522.2 L1248.3 524.0 L1242.5 524.8 L1237.3 527.5 L1231.8 529.4 L1226.2 531.0 L1220.7 532.7 L1214.3 535.7 L1208.3 539.3Z" fill="#874238"/>
<path d="M1383.3 500.0 L1388.9 500.7 L1394.4 500.3 L1400.0 500.0 L1406.8 498.7 L1413.3 496.7 L1418.2 499.1 L1422.2 502.6 L1426.2 506.2 L1430.0 510.0 L1431.5 515.7 L1434.7 520.7 L1436.2 526.5 L1439.7 531.4 L1440.7 537.3 L1433.3 535.0 L1427.7 534.9 L1422.4 533.1 L1417.2 530.8 L1411.8 529.5 L1406.4 528.3 L1400.7 528.0 L1395.4 526.2 L1390.0 525.0 L1386.3 519.2 L1382.7 513.3 L1382.9 506.7 L1383.3 500.0Z" fill="#8a463d"/>
<path d="M1621.7 518.3 L1626.6 517.1 L1631.7 518.6 L1636.6 516.6 L1641.7 518.1 L1646.7 516.7 L1649.1 523.8 L1653.3 530.0 L1658.8 531.0 L1663.4 534.1 L1668.0 537.0 L1673.3 538.3 L1669.0 543.6 L1666.7 550.0 L1662.7 553.4 L1659.0 557.1 L1655.1 560.5 L1650.0 562.5 L1646.7 566.7 L1640.0 563.3 L1637.7 558.0 L1636.9 552.2 L1635.0 546.7 L1632.0 542.3 L1630.6 537.2 L1629.3 532.0 L1625.3 528.2 L1624.6 522.7 L1621.7 518.3Z" fill="#d9ccaa"/>
<path d="M1610.0 610.0 L1615.0 608.6 L1620.2 608.1 L1625.1 606.3 L1629.8 603.8 L1635.3 604.0 L1640.0 601.7 L1645.0 605.0 L1650.6 607.4 L1655.0 611.7 L1654.0 617.5 L1650.9 622.5 L1648.9 628.0 L1646.7 633.3 L1643.0 637.7 L1639.3 641.9 L1634.9 645.6 L1631.0 649.6 L1626.7 653.3 L1621.0 653.6 L1615.8 656.7 L1609.9 656.1 L1604.3 657.0 L1599.1 659.8 L1593.3 660.0 L1590.9 654.4 L1586.7 650.0 L1591.0 646.4 L1595.3 642.7 L1598.3 637.6 L1602.4 633.8 L1606.7 630.0 L1607.2 625.0 L1609.5 620.2 L1609.4 615.0 L1610.0 610.0Z" fill="#c4b691"/>
<path d="M766.7 546.7 L769.5 542.3 L772.3 538.0 L776.7 535.0 L780.8 534.6 L784.3 531.3 L788.7 532.1 L792.5 530.5 L796.7 530.0 L800.2 525.7 L805.6 524.5 L810.0 521.7 L814.7 519.8 L819.3 521.4 L824.0 519.9 L828.7 520.0 L833.3 521.7 L836.5 518.1 L840.0 515.0 L844.3 515.9 L848.2 512.7 L852.4 512.6 L856.7 513.3 L861.0 513.4 L865.4 514.2 L869.6 512.2 L873.8 511.0 L878.3 512.8 L882.2 508.7 L886.7 510.0 L890.1 507.5 L890.4 502.9 L892.1 499.2 L894.3 495.8 L897.1 492.9 L900.0 490.0 L904.2 491.1 L908.3 488.3 L912.5 489.7 L916.7 489.7 L920.8 488.4 L925.0 488.9 L929.1 486.8 L933.3 488.3 L938.4 488.4 L942.6 490.6 L946.7 493.3 L948.5 497.9 L951.9 501.5 L954.8 505.5 L956.7 510.0 L958.0 514.7 L960.2 519.1 L962.4 523.5 L963.3 528.3 L967.6 530.1 L972.1 530.2 L976.7 530.0 L981.3 529.0 L986.0 530.3 L990.7 530.1 L995.3 531.5 L1000.0 530.0 L1004.7 532.5 L1010.0 533.3 L1014.5 531.5 L1019.7 533.2 L1023.7 528.8 L1028.6 529.0 L1033.3 528.3 L1037.9 529.0 L1042.1 526.2 L1046.7 527.1 L1051.0 524.9 L1055.6 527.1 L1060.0 526.0 L1064.1 526.9 L1068.0 525.9 L1072.1 526.9 L1076.0 524.5 L1080.0 525.8 L1084.0 525.2 L1088.0 524.9 L1092.0 524.2 L1096.1 525.6 L1100.0 524.0 L1104.4 525.5 L1108.7 523.4 L1113.0 524.0 L1117.2 521.3 L1121.7 523.6 L1126.0 523.2 L1130.4 524.3 L1134.7 523.4 L1139.0 521.0 L1143.3 521.7 L1144.6 517.3 L1146.7 513.3 L1150.8 514.3 L1155.1 512.0 L1159.2 514.0 L1163.4 513.1 L1167.6 513.2 L1171.7 515.0 L1175.3 518.4 L1174.9 523.8 L1179.2 526.8 L1180.0 531.7 L1184.7 532.1 L1189.0 534.0 L1192.9 537.3 L1198.3 535.6 L1202.3 538.4 L1206.7 540.0 L1210.1 537.7 L1214.3 536.2 L1217.4 533.5 L1220.0 530.0 L1224.9 530.0 L1228.6 526.4 L1233.2 525.5 L1237.6 523.9 L1242.7 524.5 L1246.7 521.7 L1251.1 522.9 L1254.8 519.0 L1259.0 518.5 L1263.2 518.1 L1267.3 517.5 L1271.7 517.9 L1275.9 517.6 L1280.0 516.7 L1283.3 510.0 L1287.7 509.5 L1292.1 509.0 L1296.2 511.1 L1300.5 511.4 L1304.7 512.6 L1308.8 514.7 L1313.3 513.3 L1317.5 514.3 L1321.7 513.8 L1325.8 514.4 L1330.0 514.9 L1334.3 512.6 L1338.3 516.2 L1342.4 515.9 L1346.7 515.0 L1350.8 516.3 L1354.9 515.8 L1358.9 514.0 L1362.9 513.9 L1367.0 512.5 L1371.1 514.4 L1375.1 512.0 L1379.2 511.8 L1383.3 513.3 L1386.5 516.0 L1388.9 519.3 L1390.0 523.3 L1394.1 523.6 L1398.3 523.4 L1402.3 524.1 L1406.1 525.6 L1410.1 526.3 L1413.8 528.3 L1418.0 527.8 L1421.2 532.1 L1425.4 532.0 L1429.7 531.1 L1433.3 533.3 L1438.8 534.9 L1443.3 538.3 L1448.0 537.4 L1452.6 537.1 L1457.2 535.8 L1462.1 538.4 L1466.7 536.7 L1470.1 540.2 L1475.1 539.9 L1479.2 541.6 L1483.9 541.8 L1488.1 543.5 L1491.9 546.1 L1496.2 547.5 L1500.0 550.0 L1503.2 553.4 L1508.4 553.3 L1512.6 555.0 L1514.7 560.5 L1519.4 561.2 L1523.3 563.3 L1528.5 564.9 L1532.1 569.0 L1536.7 571.7 L1542.0 572.2 L1545.5 576.2 L1550.0 578.3 L1553.8 581.0 L1558.0 581.4 L1562.3 581.6 L1566.7 581.7 L1568.1 577.3 L1570.6 573.6 L1573.3 570.0 L1575.7 565.7 L1580.8 564.1 L1583.3 560.0 L1586.8 556.8 L1590.8 554.1 L1593.3 550.0 L1596.2 546.7 L1599.3 543.6 L1603.3 541.7 L1607.4 543.3 L1611.5 544.4 L1615.7 544.3 L1620.0 543.3 L1623.9 546.7 L1628.3 548.9 L1633.3 550.0 L1633.5 554.7 L1636.6 558.6 L1636.7 563.3 L1634.4 567.7 L1632.7 572.5 L1630.0 576.7 L1632.5 580.4 L1633.2 584.4 L1632.9 588.5 L1633.6 592.5 L1633.3 596.7 L1629.5 598.6 L1625.6 600.2 L1623.5 604.3 L1620.0 606.7 L1616.3 609.0 L1613.9 612.3 L1611.8 615.7 L1611.6 620.3 L1609.8 624.0 L1606.7 626.7 L1605.4 630.6 L1603.2 634.0 L1601.0 637.3 L1597.4 639.7 L1594.2 642.4 L1593.3 646.7 L1588.8 643.7 L1583.3 643.3 L1578.0 628.0 L1560.0 626.0 L1500.0 633.0 L1400.0 632.0 L1335.0 630.0 L1268.0 630.0 L1202.0 630.0 L1137.0 630.0 L1073.0 627.0 L1033.0 620.0 L1000.0 618.0 L917.0 618.0 L860.0 620.0 L827.0 624.0 L822.0 644.0 L807.0 637.0 L792.0 627.0 L780.0 615.0 L770.0 599.0 L766.0 582.0 L766.0 564.0 L767.0 546.0Z" fill="url(#ugg)"/>
<g clip-path="url(#ugc)">
<path d="M786.0 537.0 C787.2 552.5 785.2 575.2 791.0 599.0 C796.8 622.8 804.5 623.8 809.0 632.0" fill="none" stroke="#8e4640" stroke-width="13" opacity="0.62" filter="url(#b6)" stroke-linecap="round"/>
<path d="M814.0 535.0 C815.8 546.8 813.8 562.0 821.0 582.0 C828.2 602.0 837.5 606.8 843.0 615.0" fill="none" stroke="#8e4640" stroke-width="12" opacity="0.55" filter="url(#b6)" stroke-linecap="round"/>
<path d="M866.0 526.0 C867.5 537.2 867.0 552.2 872.0 571.0 C877.0 589.8 882.5 593.5 886.0 601.0" fill="none" stroke="#8e4640" stroke-width="11" opacity="0.48" filter="url(#b6)" stroke-linecap="round"/>
<path d="M915.0 520.0 C916.2 530.0 914.8 540.8 920.0 560.0 C925.2 579.2 932.0 587.8 936.0 597.0" fill="none" stroke="#8e4640" stroke-width="10" opacity="0.41" filter="url(#b6)" stroke-linecap="round"/>
<path d="M965.0 516.0 C965.8 526.0 962.8 537.0 968.0 556.0 C973.2 575.0 981.5 583.0 986.0 592.0" fill="none" stroke="#8e4640" stroke-width="9" opacity="0.34" filter="url(#b6)" stroke-linecap="round"/>
<path d="M800.0 538.0 C801.8 551.0 799.8 568.0 807.0 590.0 C814.2 612.0 823.5 617.0 829.0 626.0" fill="none" stroke="#d47b71" stroke-width="12" opacity="0.60" filter="url(#b6)" stroke-linecap="round"/>
<path d="M842.0 530.0 C843.8 540.8 842.8 554.0 849.0 573.0 C855.2 592.0 862.5 597.8 867.0 606.0" fill="none" stroke="#d47b71" stroke-width="11" opacity="0.53" filter="url(#b6)" stroke-linecap="round"/>
<path d="M890.0 522.0 C891.8 532.8 891.2 545.8 897.0 565.0 C902.8 584.2 909.0 590.5 913.0 599.0" fill="none" stroke="#d47b71" stroke-width="10" opacity="0.46" filter="url(#b6)" stroke-linecap="round"/>
<path d="M940.0 516.0 C941.2 526.5 939.8 538.8 945.0 558.0 C950.2 577.2 957.0 584.2 961.0 593.0" fill="none" stroke="#d47b71" stroke-width="9" opacity="0.39" filter="url(#b6)" stroke-linecap="round"/>
<path d="M1000.0 520.0 C1000.8 528.8 999.2 538.8 1003.0 555.0 C1006.8 571.2 1012.0 577.5 1015.0 585.0" fill="none" stroke="#d47b71" stroke-width="8" opacity="0.32" filter="url(#b6)" stroke-linecap="round"/>
<path d="M1040 565 C1150 585 1300 585 1420 570 C1480 560 1540 585 1590 600" fill="none" stroke="#d47a70" stroke-width="26" opacity=".45" filter="url(#b6)"/>
<rect x="700" y="450" width="420" height="230" fill="url(#ldk)"/>
<rect x="1440" y="450" width="220" height="230" fill="url(#rdk)"/>
<path d="M770 600 C800 640 830 625 1000 622 C1100 640 1300 640 1400 640 C1480 640 1540 630 1600 640" fill="none" stroke="#a8504a" stroke-width="18" opacity=".5" filter="url(#b6)"/>
<path d="M1470 545 C1520 575 1560 590 1630 590" fill="none" stroke="#b05851" stroke-width="14" opacity=".5" filter="url(#b6)"/>
</g>
<path d="M800.0 798.0 L813.0 800.0 L847.0 787.0 L875.0 797.0 L903.0 793.0 L928.0 805.0 L952.0 800.0 L975.0 812.0 L1000.0 810.0 L1035.0 825.0 L1077.0 807.0 L1110.0 830.0 L1143.0 820.0 L1200.0 845.0 L1260.0 810.0 L1273.0 810.0 L1320.0 845.0 L1367.0 813.0 L1400.0 838.0 L1440.0 817.0 L1447.0 817.0 L1475.0 832.0 L1497.0 807.0 L1513.0 813.0 L1517.0 790.0 L1547.0 800.0 L1553.0 790.0 L1573.0 800.0 L1590.0 813.0 L1597.0 853.0 L1618.0 877.0 L1618.0 877.0 L1615.4 882.4 L1612.3 887.5 L1610.0 893.0 L1607.2 888.5 L1602.3 885.8 L1600.1 880.7 L1597.3 876.3 L1593.0 873.0 L1587.0 867.0 L1582.9 870.5 L1579.5 874.5 L1576.5 879.0 L1573.0 883.0 L1568.6 888.6 L1563.0 893.0 L1559.2 889.0 L1554.0 886.7 L1550.0 883.0 L1545.6 877.4 L1540.0 873.0 L1534.3 873.1 L1529.3 876.1 L1523.9 877.5 L1518.1 877.4 L1513.0 880.0 L1507.8 881.1 L1503.3 884.2 L1498.3 886.0 L1493.3 887.6 L1487.6 887.3 L1483.0 890.0 L1477.5 889.1 L1472.0 891.0 L1466.5 889.1 L1461.0 888.7 L1455.5 889.6 L1450.0 890.0 L1444.6 891.6 L1439.0 892.2 L1433.7 894.5 L1428.3 896.0 L1422.2 894.5 L1417.0 897.0 L1411.9 897.6 L1407.0 898.9 L1401.8 898.8 L1397.0 901.2 L1391.8 901.0 L1386.8 902.1 L1382.2 904.8 L1377.1 905.7 L1372.1 906.6 L1367.0 907.0 L1362.3 909.1 L1357.2 909.6 L1352.6 911.9 L1347.6 912.9 L1343.0 915.1 L1337.5 914.5 L1333.0 917.0 L1328.0 918.3 L1322.8 918.9 L1317.6 919.4 L1312.4 919.4 L1307.5 921.7 L1302.1 921.2 L1297.2 923.2 L1292.1 924.0 L1287.0 925.0 L1281.6 924.1 L1276.0 924.7 L1270.8 922.8 L1265.3 922.7 L1259.8 922.4 L1254.7 919.4 L1249.1 920.3 L1243.8 918.7 L1238.5 917.2 L1233.0 917.0 L1227.7 917.8 L1222.5 919.5 L1217.1 919.9 L1211.8 920.8 L1206.4 921.2 L1201.4 924.1 L1195.9 923.8 L1190.7 925.7 L1185.4 926.6 L1180.0 927.0 L1175.2 925.2 L1170.0 924.8 L1165.0 923.5 L1160.2 921.9 L1155.2 920.4 L1150.0 920.6 L1145.1 919.0 L1140.0 918.2 L1135.0 917.1 L1130.1 915.5 L1125.0 915.0 L1120.0 913.8 L1113.5 911.8 L1107.0 910.0 L1101.3 909.4 L1095.8 907.4 L1090.0 908.0 L1087.5 912.5 L1086.0 917.5 L1080.4 917.2 L1075.0 919.0 L1070.4 916.1 L1064.8 916.2 L1060.0 913.8 L1053.7 911.7 L1047.7 908.7 L1041.0 908.0 L1035.9 907.7 L1031.1 910.3 L1026.0 910.0 L1021.3 912.3 L1016.0 912.7 L1011.0 913.8 L1005.5 915.6 L999.7 915.7 L994.0 915.6 L988.0 917.4 L981.7 916.4 L975.6 917.5 L973.0 922.9 L972.0 928.8 L968.0 934.4 L966.0 941.0 L957.0 938.0 L952.9 943.4 L947.5 947.5 L941.4 951.3 L936.0 956.0 L931.0 955.2 L925.9 956.3 L921.0 955.0 L916.6 951.0 L911.7 947.6 L906.0 945.6 L901.8 942.3 L899.6 937.0 L895.0 934.0 L891.0 928.7 L887.5 923.0 L881.9 921.0 L878.0 928.8 L873.4 932.9 L868.8 937.0 L862.0 936.6 L855.6 939.0 L849.5 934.9 L842.5 932.5 L838.0 929.3 L834.7 925.0 L831.0 921.0 L826.5 915.5 L821.9 910.0 L815.3 909.4 L808.8 908.0 L810.9 903.4 L814.4 899.7 L810.6 895.0 L803.9 893.5 L797.5 891.0 L793.2 885.1 L788.0 880.0 L783.6 875.1 L781.6 868.8 L782.9 863.2 L784.0 857.5 L785.4 852.2 L785.9 846.5 L788.3 841.5 L790.7 836.4 L792.0 831.0 L793.4 825.5 L793.5 819.7 L797.3 814.8 L798.1 809.2 L800.0 803.8 L800.0 798.0Z" fill="url(#lgg)"/>
<g clip-path="url(#lgc)">
<path d="M848.0 792.0 C843.8 799.5 839.0 801.0 831.0 822.0 C823.0 843.0 820.8 856.5 816.0 876.0 C811.2 895.5 813.0 894.0 812.0 900.0" fill="none" stroke="#864340" stroke-width="13" opacity="0.58" filter="url(#b6)" stroke-linecap="round"/>
<path d="M902.0 799.0 C897.0 808.0 889.5 818.5 882.0 835.0 C874.5 851.5 872.5 844.0 872.0 865.0 C871.5 886.0 878.0 905.5 880.0 919.0" fill="none" stroke="#864340" stroke-width="13" opacity="0.50" filter="url(#b6)" stroke-linecap="round"/>
<path d="M951.0 807.0 C945.5 814.0 937.8 818.8 929.0 835.0 C920.2 851.2 921.2 852.0 916.0 872.0 C910.8 892.0 910.8 898.0 908.0 915.0 C905.2 932.0 905.8 933.8 905.0 940.0" fill="none" stroke="#864340" stroke-width="13" opacity="0.42" filter="url(#b6)" stroke-linecap="round"/>
<path d="M1000.0 831.0 C996.2 839.5 991.0 845.2 985.0 865.0 C979.0 884.8 978.2 898.8 976.0 910.0" fill="none" stroke="#864340" stroke-width="13" opacity="0.34" filter="url(#b6)" stroke-linecap="round"/>
<path d="M803.0 812.0 C801.0 826.5 797.0 855.5 795.0 870.0" fill="none" stroke="#cf7168" stroke-width="13" opacity="0.50" filter="url(#b6)" stroke-linecap="round"/>
<path d="M872.0 812.0 C867.0 821.5 858.5 828.0 852.0 850.0 C845.5 872.0 845.0 880.0 846.0 900.0 C847.0 920.0 853.5 922.5 856.0 930.0" fill="none" stroke="#cf7168" stroke-width="13" opacity="0.44" filter="url(#b6)" stroke-linecap="round"/>
<path d="M926.0 817.0 C919.8 827.8 908.8 839.2 901.0 860.0 C893.2 880.8 890.0 878.8 895.0 900.0 C900.0 921.2 914.5 933.8 921.0 945.0" fill="none" stroke="#cf7168" stroke-width="13" opacity="0.38" filter="url(#b6)" stroke-linecap="round"/>
<path d="M976.0 827.0 C971.0 837.8 963.5 844.2 956.0 870.0 C948.5 895.8 948.5 915.0 946.0 930.0" fill="none" stroke="#cf7168" stroke-width="13" opacity="0.32" filter="url(#b6)" stroke-linecap="round"/>
<path d="M1040.0 840.0 C1037.5 852.5 1032.5 877.5 1030.0 890.0" fill="none" stroke="#cf7168" stroke-width="13" opacity="0.26" filter="url(#b6)" stroke-linecap="round"/>
<rect x="700" y="760" width="420" height="230" fill="url(#ldk)"/>
<rect x="1470" y="760" width="160" height="230" fill="url(#rdk)"/>
<path d="M1020 870 C1150 880 1300 885 1420 870 C1480 862 1540 850 1590 850" fill="none" stroke="#d67c72" stroke-width="24" opacity=".45" filter="url(#b6)"/>
<path d="M1000 915 C1150 920 1300 925 1420 900 C1500 890 1560 890 1620 890" fill="none" stroke="#b15650" stroke-width="14" opacity=".45" filter="url(#b6)"/>
<ellipse cx="1295" cy="868" rx="9" ry="6" fill="#f59a8e" opacity=".9" filter="url(#b1)"/>
<ellipse cx="1217" cy="880" rx="5" ry="7" fill="#f59a8e" opacity=".8" filter="url(#b1)"/>
<ellipse cx="1268" cy="905" rx="3" ry="7" fill="#f59a8e" opacity=".7" filter="url(#b1)"/>
<path d="M1195 915 C1210 910 1225 912 1235 916" stroke="#8a3f3a" stroke-width="4" fill="none" opacity=".6" filter="url(#b1)"/>
</g>
<path d="M856.7 690.0 C868.3 687.1 860.8 691.7 886.7 688.3 C912.5 685.0 928.3 677.9 960.0 676.7 C991.7 675.4 986.7 671.7 1013.3 683.3 C1040.0 695.0 1053.3 706.7 1066.7 723.3 C1080.0 740.0 1080.0 744.2 1066.7 750.0 C1053.3 755.8 1041.7 755.0 1013.3 746.7 C985.0 738.3 981.7 725.8 953.3 716.7 C925.0 707.5 925.8 712.1 900.0 710.0 C874.2 707.9 865.0 710.8 850.0 708.3 C835.0 705.8 838.3 704.6 840.0 700.0 C841.7 695.4 845.0 692.9 856.7 690.0Z" fill="#a59772"/>
<path d="M856.0 692.0 C866.0 682.5 874.0 679.0 900.0 672.0 C926.0 665.0 934.5 660.0 960.0 664.0 C985.5 668.0 991.0 668.5 1002.0 688.0 C1013.0 707.5 1017.0 732.0 1004.0 742.0 C991.0 752.0 976.0 735.0 950.0 728.0 C924.0 721.0 922.5 718.5 900.0 714.0 C877.5 709.5 871.0 715.5 860.0 710.0 C849.0 704.5 846.0 701.5 856.0 692.0Z" fill="#a59772"/>
<path d="M1433.3 703.3 C1443.3 692.5 1454.2 686.7 1483.3 690.0 C1512.5 693.3 1532.5 705.8 1550.0 716.7 C1567.5 727.5 1565.8 728.3 1553.3 733.3 C1540.8 738.3 1527.5 736.7 1500.0 736.7 C1472.5 736.7 1460.0 741.7 1443.3 733.3 C1426.7 725.0 1423.3 714.2 1433.3 703.3Z" fill="#9d8f6c"/>
<g filter="url(#b05)">
<clipPath id="cL13"><path d="M1550.0 716.7 C1553.3 705.0 1565.0 703.3 1573.3 703.3 C1581.7 703.3 1579.6 705.0 1583.3 716.7 C1587.1 728.3 1589.2 731.7 1588.3 750.0 C1587.5 768.3 1585.4 776.7 1580.0 790.0 C1574.6 803.3 1573.3 805.0 1566.7 803.3 C1560.0 801.7 1555.0 796.7 1553.3 783.3 C1551.7 770.0 1560.8 766.7 1560.0 750.0 C1559.2 733.3 1546.7 728.3 1550.0 716.7Z"/></clipPath>
<path d="M1550.0 716.7 C1553.3 705.0 1565.0 703.3 1573.3 703.3 C1581.7 703.3 1579.6 705.0 1583.3 716.7 C1587.1 728.3 1589.2 731.7 1588.3 750.0 C1587.5 768.3 1585.4 776.7 1580.0 790.0 C1574.6 803.3 1573.3 805.0 1566.7 803.3 C1560.0 801.7 1555.0 796.7 1553.3 783.3 C1551.7 770.0 1560.8 766.7 1560.0 750.0 C1559.2 733.3 1546.7 728.3 1550.0 716.7Z" fill="url(#tgd)"/>
<path d="M1550.0 716.7 C1553.3 705.0 1565.0 703.3 1573.3 703.3 C1581.7 703.3 1579.6 705.0 1583.3 716.7 C1587.1 728.3 1589.2 731.7 1588.3 750.0 C1587.5 768.3 1585.4 776.7 1580.0 790.0 C1574.6 803.3 1573.3 805.0 1566.7 803.3 C1560.0 801.7 1555.0 796.7 1553.3 783.3 C1551.7 770.0 1560.8 766.7 1560.0 750.0 C1559.2 733.3 1546.7 728.3 1550.0 716.7Z" fill="none" stroke="#6f6344" stroke-width="10" opacity=".5" filter="url(#b3)" clip-path="url(#cL13)"/>
<path d="M1550.0 716.7 C1553.3 705.0 1565.0 703.3 1573.3 703.3 C1581.7 703.3 1579.6 705.0 1583.3 716.7 C1587.1 728.3 1589.2 731.7 1588.3 750.0 C1587.5 768.3 1585.4 776.7 1580.0 790.0 C1574.6 803.3 1573.3 805.0 1566.7 803.3 C1560.0 801.7 1555.0 796.7 1553.3 783.3 C1551.7 770.0 1560.8 766.7 1560.0 750.0 C1559.2 733.3 1546.7 728.3 1550.0 716.7Z" fill="none" stroke="#5f5438" stroke-width="1.2" opacity=".42"/>
<clipPath id="cL12"><path d="M1493.3 726.7 C1504.2 720.8 1529.2 720.8 1543.3 726.7 C1557.5 732.5 1548.3 732.5 1550.0 750.0 C1551.7 767.5 1559.2 785.8 1550.0 796.7 C1540.8 807.5 1525.8 805.0 1513.3 793.3 C1500.8 781.7 1505.0 766.7 1500.0 750.0 C1495.0 733.3 1482.5 732.5 1493.3 726.7Z"/></clipPath>
<path d="M1493.3 726.7 C1504.2 720.8 1529.2 720.8 1543.3 726.7 C1557.5 732.5 1548.3 732.5 1550.0 750.0 C1551.7 767.5 1559.2 785.8 1550.0 796.7 C1540.8 807.5 1525.8 805.0 1513.3 793.3 C1500.8 781.7 1505.0 766.7 1500.0 750.0 C1495.0 733.3 1482.5 732.5 1493.3 726.7Z" fill="url(#tgd)"/>
<path d="M1493.3 726.7 C1504.2 720.8 1529.2 720.8 1543.3 726.7 C1557.5 732.5 1548.3 732.5 1550.0 750.0 C1551.7 767.5 1559.2 785.8 1550.0 796.7 C1540.8 807.5 1525.8 805.0 1513.3 793.3 C1500.8 781.7 1505.0 766.7 1500.0 750.0 C1495.0 733.3 1482.5 732.5 1493.3 726.7Z" fill="none" stroke="#6f6344" stroke-width="10" opacity=".5" filter="url(#b3)" clip-path="url(#cL12)"/>
<path d="M1493.3 726.7 C1504.2 720.8 1529.2 720.8 1543.3 726.7 C1557.5 732.5 1548.3 732.5 1550.0 750.0 C1551.7 767.5 1559.2 785.8 1550.0 796.7 C1540.8 807.5 1525.8 805.0 1513.3 793.3 C1500.8 781.7 1505.0 766.7 1500.0 750.0 C1495.0 733.3 1482.5 732.5 1493.3 726.7Z" fill="none" stroke="#5f5438" stroke-width="1.2" opacity=".42"/>
<clipPath id="cL11"><path d="M1490.0 736.7 C1492.5 727.5 1500.0 721.7 1506.7 733.3 C1513.3 745.0 1513.3 762.5 1516.7 783.3 C1520.0 804.2 1524.2 809.2 1520.0 816.7 C1515.8 824.2 1505.8 825.0 1500.0 813.3 C1494.2 801.7 1499.2 789.2 1496.7 770.0 C1494.2 750.8 1487.5 745.8 1490.0 736.7Z"/></clipPath>
<path d="M1490.0 736.7 C1492.5 727.5 1500.0 721.7 1506.7 733.3 C1513.3 745.0 1513.3 762.5 1516.7 783.3 C1520.0 804.2 1524.2 809.2 1520.0 816.7 C1515.8 824.2 1505.8 825.0 1500.0 813.3 C1494.2 801.7 1499.2 789.2 1496.7 770.0 C1494.2 750.8 1487.5 745.8 1490.0 736.7Z" fill="url(#tgd)"/>
<path d="M1490.0 736.7 C1492.5 727.5 1500.0 721.7 1506.7 733.3 C1513.3 745.0 1513.3 762.5 1516.7 783.3 C1520.0 804.2 1524.2 809.2 1520.0 816.7 C1515.8 824.2 1505.8 825.0 1500.0 813.3 C1494.2 801.7 1499.2 789.2 1496.7 770.0 C1494.2 750.8 1487.5 745.8 1490.0 736.7Z" fill="none" stroke="#6f6344" stroke-width="10" opacity=".5" filter="url(#b3)" clip-path="url(#cL11)"/>
<path d="M1490.0 736.7 C1492.5 727.5 1500.0 721.7 1506.7 733.3 C1513.3 745.0 1513.3 762.5 1516.7 783.3 C1520.0 804.2 1524.2 809.2 1520.0 816.7 C1515.8 824.2 1505.8 825.0 1500.0 813.3 C1494.2 801.7 1499.2 789.2 1496.7 770.0 C1494.2 750.8 1487.5 745.8 1490.0 736.7Z" fill="none" stroke="#5f5438" stroke-width="1.2" opacity=".42"/>
<clipPath id="cL1"><path d="M801.7 713.3 C803.3 696.7 802.1 703.8 810.0 700.0 C817.9 696.2 824.2 695.0 833.3 698.3 C842.5 701.7 842.9 700.4 846.7 713.3 C850.4 726.2 848.3 730.8 848.3 750.0 C848.3 769.2 850.4 777.5 846.7 790.0 C842.9 802.5 841.2 796.7 833.3 800.0 C825.4 803.3 822.5 811.7 815.0 803.3 C807.5 795.0 806.7 789.2 803.3 766.7 C800.0 744.2 800.0 730.0 801.7 713.3Z"/></clipPath>
<path d="M801.7 713.3 C803.3 696.7 802.1 703.8 810.0 700.0 C817.9 696.2 824.2 695.0 833.3 698.3 C842.5 701.7 842.9 700.4 846.7 713.3 C850.4 726.2 848.3 730.8 848.3 750.0 C848.3 769.2 850.4 777.5 846.7 790.0 C842.9 802.5 841.2 796.7 833.3 800.0 C825.4 803.3 822.5 811.7 815.0 803.3 C807.5 795.0 806.7 789.2 803.3 766.7 C800.0 744.2 800.0 730.0 801.7 713.3Z" fill="url(#tg)"/>
<path d="M801.7 713.3 C803.3 696.7 802.1 703.8 810.0 700.0 C817.9 696.2 824.2 695.0 833.3 698.3 C842.5 701.7 842.9 700.4 846.7 713.3 C850.4 726.2 848.3 730.8 848.3 750.0 C848.3 769.2 850.4 777.5 846.7 790.0 C842.9 802.5 841.2 796.7 833.3 800.0 C825.4 803.3 822.5 811.7 815.0 803.3 C807.5 795.0 806.7 789.2 803.3 766.7 C800.0 744.2 800.0 730.0 801.7 713.3Z" fill="none" stroke="#6f6344" stroke-width="10" opacity=".5" filter="url(#b3)" clip-path="url(#cL1)"/>
<path d="M801.7 713.3 C803.3 696.7 802.1 703.8 810.0 700.0 C817.9 696.2 824.2 695.0 833.3 698.3 C842.5 701.7 842.9 700.4 846.7 713.3 C850.4 726.2 848.3 730.8 848.3 750.0 C848.3 769.2 850.4 777.5 846.7 790.0 C842.9 802.5 841.2 796.7 833.3 800.0 C825.4 803.3 822.5 811.7 815.0 803.3 C807.5 795.0 806.7 789.2 803.3 766.7 C800.0 744.2 800.0 730.0 801.7 713.3Z" fill="none" stroke="#5f5438" stroke-width="1.2" opacity=".42"/>
<clipPath id="cL2"><path d="M850.0 706.7 C856.2 697.1 860.8 698.3 873.3 698.3 C885.8 698.3 891.7 697.9 900.0 706.7 C908.3 715.4 905.8 712.5 906.7 733.3 C907.5 754.2 908.3 772.5 903.3 790.0 C898.3 807.5 898.3 800.0 886.7 803.3 C875.0 806.7 866.2 808.3 856.7 803.3 C847.1 798.3 850.4 800.0 848.3 783.3 C846.2 766.7 847.9 755.8 848.3 736.7 C848.8 717.5 843.8 716.3 850.0 706.7Z"/></clipPath>
<path d="M850.0 706.7 C856.2 697.1 860.8 698.3 873.3 698.3 C885.8 698.3 891.7 697.9 900.0 706.7 C908.3 715.4 905.8 712.5 906.7 733.3 C907.5 754.2 908.3 772.5 903.3 790.0 C898.3 807.5 898.3 800.0 886.7 803.3 C875.0 806.7 866.2 808.3 856.7 803.3 C847.1 798.3 850.4 800.0 848.3 783.3 C846.2 766.7 847.9 755.8 848.3 736.7 C848.8 717.5 843.8 716.3 850.0 706.7Z" fill="url(#tg)"/>
<path d="M850.0 706.7 C856.2 697.1 860.8 698.3 873.3 698.3 C885.8 698.3 891.7 697.9 900.0 706.7 C908.3 715.4 905.8 712.5 906.7 733.3 C907.5 754.2 908.3 772.5 903.3 790.0 C898.3 807.5 898.3 800.0 886.7 803.3 C875.0 806.7 866.2 808.3 856.7 803.3 C847.1 798.3 850.4 800.0 848.3 783.3 C846.2 766.7 847.9 755.8 848.3 736.7 C848.8 717.5 843.8 716.3 850.0 706.7Z" fill="none" stroke="#6f6344" stroke-width="10" opacity=".5" filter="url(#b3)" clip-path="url(#cL2)"/>
<path d="M850.0 706.7 C856.2 697.1 860.8 698.3 873.3 698.3 C885.8 698.3 891.7 697.9 900.0 706.7 C908.3 715.4 905.8 712.5 906.7 733.3 C907.5 754.2 908.3 772.5 903.3 790.0 C898.3 807.5 898.3 800.0 886.7 803.3 C875.0 806.7 866.2 808.3 856.7 803.3 C847.1 798.3 850.4 800.0 848.3 783.3 C846.2 766.7 847.9 755.8 848.3 736.7 C848.8 717.5 843.8 716.3 850.0 706.7Z" fill="none" stroke="#5f5438" stroke-width="1.2" opacity=".42"/>
<clipPath id="cL3"><path d="M906.7 716.7 C912.5 695.8 916.7 700.8 926.7 700.0 C936.7 699.2 940.0 700.8 946.7 713.3 C953.3 725.8 952.5 728.3 953.3 750.0 C954.2 771.7 955.0 785.0 950.0 800.0 C945.0 815.0 943.3 807.5 933.3 810.0 C923.3 812.5 917.5 816.7 910.0 810.0 C902.5 803.3 904.2 806.7 903.3 783.3 C902.5 760.0 900.8 737.5 906.7 716.7Z"/></clipPath>
<path d="M906.7 716.7 C912.5 695.8 916.7 700.8 926.7 700.0 C936.7 699.2 940.0 700.8 946.7 713.3 C953.3 725.8 952.5 728.3 953.3 750.0 C954.2 771.7 955.0 785.0 950.0 800.0 C945.0 815.0 943.3 807.5 933.3 810.0 C923.3 812.5 917.5 816.7 910.0 810.0 C902.5 803.3 904.2 806.7 903.3 783.3 C902.5 760.0 900.8 737.5 906.7 716.7Z" fill="url(#tg)"/>
<path d="M906.7 716.7 C912.5 695.8 916.7 700.8 926.7 700.0 C936.7 699.2 940.0 700.8 946.7 713.3 C953.3 725.8 952.5 728.3 953.3 750.0 C954.2 771.7 955.0 785.0 950.0 800.0 C945.0 815.0 943.3 807.5 933.3 810.0 C923.3 812.5 917.5 816.7 910.0 810.0 C902.5 803.3 904.2 806.7 903.3 783.3 C902.5 760.0 900.8 737.5 906.7 716.7Z" fill="none" stroke="#6f6344" stroke-width="10" opacity=".5" filter="url(#b3)" clip-path="url(#cL3)"/>
<path d="M906.7 716.7 C912.5 695.8 916.7 700.8 926.7 700.0 C936.7 699.2 940.0 700.8 946.7 713.3 C953.3 725.8 952.5 728.3 953.3 750.0 C954.2 771.7 955.0 785.0 950.0 800.0 C945.0 815.0 943.3 807.5 933.3 810.0 C923.3 812.5 917.5 816.7 910.0 810.0 C902.5 803.3 904.2 806.7 903.3 783.3 C902.5 760.0 900.8 737.5 906.7 716.7Z" fill="none" stroke="#5f5438" stroke-width="1.2" opacity=".42"/>
<clipPath id="cL4"><path d="M953.3 716.7 C957.1 697.5 956.7 704.2 966.7 706.7 C976.7 709.2 983.3 717.5 993.3 726.7 C1003.3 735.8 1003.8 729.2 1006.7 743.3 C1009.6 757.5 1006.7 765.0 1005.0 783.3 C1003.3 801.7 1011.2 808.3 1000.0 816.7 C988.8 825.0 972.1 825.0 960.0 816.7 C947.9 808.3 953.3 808.3 951.7 783.3 C950.0 758.3 949.6 735.8 953.3 716.7Z"/></clipPath>
<path d="M953.3 716.7 C957.1 697.5 956.7 704.2 966.7 706.7 C976.7 709.2 983.3 717.5 993.3 726.7 C1003.3 735.8 1003.8 729.2 1006.7 743.3 C1009.6 757.5 1006.7 765.0 1005.0 783.3 C1003.3 801.7 1011.2 808.3 1000.0 816.7 C988.8 825.0 972.1 825.0 960.0 816.7 C947.9 808.3 953.3 808.3 951.7 783.3 C950.0 758.3 949.6 735.8 953.3 716.7Z" fill="url(#tg)"/>
<path d="M953.3 716.7 C957.1 697.5 956.7 704.2 966.7 706.7 C976.7 709.2 983.3 717.5 993.3 726.7 C1003.3 735.8 1003.8 729.2 1006.7 743.3 C1009.6 757.5 1006.7 765.0 1005.0 783.3 C1003.3 801.7 1011.2 808.3 1000.0 816.7 C988.8 825.0 972.1 825.0 960.0 816.7 C947.9 808.3 953.3 808.3 951.7 783.3 C950.0 758.3 949.6 735.8 953.3 716.7Z" fill="none" stroke="#6f6344" stroke-width="10" opacity=".5" filter="url(#b3)" clip-path="url(#cL4)"/>
<path d="M953.3 716.7 C957.1 697.5 956.7 704.2 966.7 706.7 C976.7 709.2 983.3 717.5 993.3 726.7 C1003.3 735.8 1003.8 729.2 1006.7 743.3 C1009.6 757.5 1006.7 765.0 1005.0 783.3 C1003.3 801.7 1011.2 808.3 1000.0 816.7 C988.8 825.0 972.1 825.0 960.0 816.7 C947.9 808.3 953.3 808.3 951.7 783.3 C950.0 758.3 949.6 735.8 953.3 716.7Z" fill="none" stroke="#5f5438" stroke-width="1.2" opacity=".42"/>
<clipPath id="cL10"><path d="M1443.3 733.3 C1448.3 717.5 1452.5 721.7 1463.3 720.0 C1474.2 718.3 1478.3 719.2 1486.7 726.7 C1495.0 734.2 1493.3 734.2 1496.7 750.0 C1500.0 765.8 1500.0 770.0 1500.0 790.0 C1500.0 810.0 1500.0 818.3 1496.7 830.0 C1493.3 841.7 1500.8 837.5 1486.7 836.7 C1472.5 835.8 1450.8 840.0 1440.0 826.7 C1429.2 813.3 1442.5 806.7 1443.3 783.3 C1444.2 760.0 1438.3 749.2 1443.3 733.3Z"/></clipPath>
<path d="M1443.3 733.3 C1448.3 717.5 1452.5 721.7 1463.3 720.0 C1474.2 718.3 1478.3 719.2 1486.7 726.7 C1495.0 734.2 1493.3 734.2 1496.7 750.0 C1500.0 765.8 1500.0 770.0 1500.0 790.0 C1500.0 810.0 1500.0 818.3 1496.7 830.0 C1493.3 841.7 1500.8 837.5 1486.7 836.7 C1472.5 835.8 1450.8 840.0 1440.0 826.7 C1429.2 813.3 1442.5 806.7 1443.3 783.3 C1444.2 760.0 1438.3 749.2 1443.3 733.3Z" fill="url(#tg)"/>
<path d="M1443.3 733.3 C1448.3 717.5 1452.5 721.7 1463.3 720.0 C1474.2 718.3 1478.3 719.2 1486.7 726.7 C1495.0 734.2 1493.3 734.2 1496.7 750.0 C1500.0 765.8 1500.0 770.0 1500.0 790.0 C1500.0 810.0 1500.0 818.3 1496.7 830.0 C1493.3 841.7 1500.8 837.5 1486.7 836.7 C1472.5 835.8 1450.8 840.0 1440.0 826.7 C1429.2 813.3 1442.5 806.7 1443.3 783.3 C1444.2 760.0 1438.3 749.2 1443.3 733.3Z" fill="none" stroke="#6f6344" stroke-width="10" opacity=".5" filter="url(#b3)" clip-path="url(#cL10)"/>
<path d="M1443.3 733.3 C1448.3 717.5 1452.5 721.7 1463.3 720.0 C1474.2 718.3 1478.3 719.2 1486.7 726.7 C1495.0 734.2 1493.3 734.2 1496.7 750.0 C1500.0 765.8 1500.0 770.0 1500.0 790.0 C1500.0 810.0 1500.0 818.3 1496.7 830.0 C1493.3 841.7 1500.8 837.5 1486.7 836.7 C1472.5 835.8 1450.8 840.0 1440.0 826.7 C1429.2 813.3 1442.5 806.7 1443.3 783.3 C1444.2 760.0 1438.3 749.2 1443.3 733.3Z" fill="none" stroke="#5f5438" stroke-width="1.2" opacity=".42"/>
<clipPath id="cL9"><path d="M1371.7 740.0 C1378.3 730.0 1377.9 732.9 1393.3 730.0 C1408.8 727.1 1420.8 725.0 1433.3 728.3 C1445.8 731.7 1440.8 729.6 1443.3 743.3 C1445.8 757.1 1445.0 761.7 1443.3 783.3 C1441.7 805.0 1446.7 816.2 1436.7 830.0 C1426.7 843.8 1416.8 838.8 1403.3 838.3 C1389.8 837.9 1391.0 836.2 1382.7 828.3 C1374.3 820.4 1374.0 821.2 1370.0 806.7 C1366.0 792.1 1366.2 786.7 1366.7 770.0 C1367.1 753.3 1365.0 750.0 1371.7 740.0Z"/></clipPath>
<path d="M1371.7 740.0 C1378.3 730.0 1377.9 732.9 1393.3 730.0 C1408.8 727.1 1420.8 725.0 1433.3 728.3 C1445.8 731.7 1440.8 729.6 1443.3 743.3 C1445.8 757.1 1445.0 761.7 1443.3 783.3 C1441.7 805.0 1446.7 816.2 1436.7 830.0 C1426.7 843.8 1416.8 838.8 1403.3 838.3 C1389.8 837.9 1391.0 836.2 1382.7 828.3 C1374.3 820.4 1374.0 821.2 1370.0 806.7 C1366.0 792.1 1366.2 786.7 1366.7 770.0 C1367.1 753.3 1365.0 750.0 1371.7 740.0Z" fill="url(#tg)"/>
<path d="M1371.7 740.0 C1378.3 730.0 1377.9 732.9 1393.3 730.0 C1408.8 727.1 1420.8 725.0 1433.3 728.3 C1445.8 731.7 1440.8 729.6 1443.3 743.3 C1445.8 757.1 1445.0 761.7 1443.3 783.3 C1441.7 805.0 1446.7 816.2 1436.7 830.0 C1426.7 843.8 1416.8 838.8 1403.3 838.3 C1389.8 837.9 1391.0 836.2 1382.7 828.3 C1374.3 820.4 1374.0 821.2 1370.0 806.7 C1366.0 792.1 1366.2 786.7 1366.7 770.0 C1367.1 753.3 1365.0 750.0 1371.7 740.0Z" fill="none" stroke="#6f6344" stroke-width="10" opacity=".5" filter="url(#b3)" clip-path="url(#cL9)"/>
<path d="M1371.7 740.0 C1378.3 730.0 1377.9 732.9 1393.3 730.0 C1408.8 727.1 1420.8 725.0 1433.3 728.3 C1445.8 731.7 1440.8 729.6 1443.3 743.3 C1445.8 757.1 1445.0 761.7 1443.3 783.3 C1441.7 805.0 1446.7 816.2 1436.7 830.0 C1426.7 843.8 1416.8 838.8 1403.3 838.3 C1389.8 837.9 1391.0 836.2 1382.7 828.3 C1374.3 820.4 1374.0 821.2 1370.0 806.7 C1366.0 792.1 1366.2 786.7 1366.7 770.0 C1367.1 753.3 1365.0 750.0 1371.7 740.0Z" fill="none" stroke="#5f5438" stroke-width="1.2" opacity=".42"/>
<clipPath id="cL8"><path d="M1280.0 756.7 C1287.5 744.6 1285.0 749.2 1300.0 745.0 C1315.0 740.8 1327.3 738.8 1340.0 740.0 C1352.7 741.2 1347.2 741.7 1350.7 750.0 C1354.2 758.3 1352.7 762.1 1354.0 773.3 C1355.3 784.6 1352.3 787.0 1356.0 795.0 C1359.7 803.0 1366.8 795.8 1368.7 805.3 C1370.5 814.9 1372.2 823.0 1363.3 833.3 C1354.5 843.7 1349.2 845.8 1333.3 846.7 C1317.5 847.5 1316.7 847.5 1300.0 836.7 C1283.3 825.8 1274.2 814.2 1266.7 803.3 C1259.2 792.5 1266.7 805.0 1270.0 793.3 C1273.3 781.7 1272.5 768.8 1280.0 756.7Z"/></clipPath>
<path d="M1280.0 756.7 C1287.5 744.6 1285.0 749.2 1300.0 745.0 C1315.0 740.8 1327.3 738.8 1340.0 740.0 C1352.7 741.2 1347.2 741.7 1350.7 750.0 C1354.2 758.3 1352.7 762.1 1354.0 773.3 C1355.3 784.6 1352.3 787.0 1356.0 795.0 C1359.7 803.0 1366.8 795.8 1368.7 805.3 C1370.5 814.9 1372.2 823.0 1363.3 833.3 C1354.5 843.7 1349.2 845.8 1333.3 846.7 C1317.5 847.5 1316.7 847.5 1300.0 836.7 C1283.3 825.8 1274.2 814.2 1266.7 803.3 C1259.2 792.5 1266.7 805.0 1270.0 793.3 C1273.3 781.7 1272.5 768.8 1280.0 756.7Z" fill="url(#tg)"/>
<path d="M1280.0 756.7 C1287.5 744.6 1285.0 749.2 1300.0 745.0 C1315.0 740.8 1327.3 738.8 1340.0 740.0 C1352.7 741.2 1347.2 741.7 1350.7 750.0 C1354.2 758.3 1352.7 762.1 1354.0 773.3 C1355.3 784.6 1352.3 787.0 1356.0 795.0 C1359.7 803.0 1366.8 795.8 1368.7 805.3 C1370.5 814.9 1372.2 823.0 1363.3 833.3 C1354.5 843.7 1349.2 845.8 1333.3 846.7 C1317.5 847.5 1316.7 847.5 1300.0 836.7 C1283.3 825.8 1274.2 814.2 1266.7 803.3 C1259.2 792.5 1266.7 805.0 1270.0 793.3 C1273.3 781.7 1272.5 768.8 1280.0 756.7Z" fill="none" stroke="#6f6344" stroke-width="10" opacity=".5" filter="url(#b3)" clip-path="url(#cL8)"/>
<path d="M1280.0 756.7 C1287.5 744.6 1285.0 749.2 1300.0 745.0 C1315.0 740.8 1327.3 738.8 1340.0 740.0 C1352.7 741.2 1347.2 741.7 1350.7 750.0 C1354.2 758.3 1352.7 762.1 1354.0 773.3 C1355.3 784.6 1352.3 787.0 1356.0 795.0 C1359.7 803.0 1366.8 795.8 1368.7 805.3 C1370.5 814.9 1372.2 823.0 1363.3 833.3 C1354.5 843.7 1349.2 845.8 1333.3 846.7 C1317.5 847.5 1316.7 847.5 1300.0 836.7 C1283.3 825.8 1274.2 814.2 1266.7 803.3 C1259.2 792.5 1266.7 805.0 1270.0 793.3 C1273.3 781.7 1272.5 768.8 1280.0 756.7Z" fill="none" stroke="#5f5438" stroke-width="1.2" opacity=".42"/>
<clipPath id="cL5"><path d="M1006.7 743.3 C1010.4 734.2 1011.7 735.0 1020.0 733.3 C1028.3 731.7 1028.3 732.5 1040.0 736.7 C1051.7 740.8 1059.2 738.3 1066.7 750.0 C1074.2 761.7 1070.0 768.3 1070.0 783.3 C1070.0 798.3 1075.8 797.5 1066.7 810.0 C1057.5 822.5 1049.2 826.2 1033.3 833.3 C1017.5 840.4 1011.7 842.5 1003.3 838.3 C995.0 834.2 999.6 833.8 1000.0 816.7 C1000.4 799.6 1003.3 788.3 1005.0 770.0 C1006.7 751.7 1002.9 752.5 1006.7 743.3Z"/></clipPath>
<path d="M1006.7 743.3 C1010.4 734.2 1011.7 735.0 1020.0 733.3 C1028.3 731.7 1028.3 732.5 1040.0 736.7 C1051.7 740.8 1059.2 738.3 1066.7 750.0 C1074.2 761.7 1070.0 768.3 1070.0 783.3 C1070.0 798.3 1075.8 797.5 1066.7 810.0 C1057.5 822.5 1049.2 826.2 1033.3 833.3 C1017.5 840.4 1011.7 842.5 1003.3 838.3 C995.0 834.2 999.6 833.8 1000.0 816.7 C1000.4 799.6 1003.3 788.3 1005.0 770.0 C1006.7 751.7 1002.9 752.5 1006.7 743.3Z" fill="url(#tg)"/>
<path d="M1006.7 743.3 C1010.4 734.2 1011.7 735.0 1020.0 733.3 C1028.3 731.7 1028.3 732.5 1040.0 736.7 C1051.7 740.8 1059.2 738.3 1066.7 750.0 C1074.2 761.7 1070.0 768.3 1070.0 783.3 C1070.0 798.3 1075.8 797.5 1066.7 810.0 C1057.5 822.5 1049.2 826.2 1033.3 833.3 C1017.5 840.4 1011.7 842.5 1003.3 838.3 C995.0 834.2 999.6 833.8 1000.0 816.7 C1000.4 799.6 1003.3 788.3 1005.0 770.0 C1006.7 751.7 1002.9 752.5 1006.7 743.3Z" fill="none" stroke="#6f6344" stroke-width="10" opacity=".5" filter="url(#b3)" clip-path="url(#cL5)"/>
<path d="M1006.7 743.3 C1010.4 734.2 1011.7 735.0 1020.0 733.3 C1028.3 731.7 1028.3 732.5 1040.0 736.7 C1051.7 740.8 1059.2 738.3 1066.7 750.0 C1074.2 761.7 1070.0 768.3 1070.0 783.3 C1070.0 798.3 1075.8 797.5 1066.7 810.0 C1057.5 822.5 1049.2 826.2 1033.3 833.3 C1017.5 840.4 1011.7 842.5 1003.3 838.3 C995.0 834.2 999.6 833.8 1000.0 816.7 C1000.4 799.6 1003.3 788.3 1005.0 770.0 C1006.7 751.7 1002.9 752.5 1006.7 743.3Z" fill="none" stroke="#5f5438" stroke-width="1.2" opacity=".42"/>
<clipPath id="cL6"><path d="M1070.0 751.7 C1078.8 742.9 1087.5 749.6 1106.7 748.3 C1125.8 747.1 1135.4 737.9 1146.7 746.7 C1157.9 755.4 1152.5 767.5 1151.7 783.3 C1150.8 799.2 1148.8 797.5 1143.3 810.0 C1137.9 822.5 1144.2 826.2 1130.0 833.3 C1115.8 840.4 1099.2 842.5 1086.7 838.3 C1074.2 834.2 1083.8 830.4 1080.0 816.7 C1076.2 802.9 1074.2 799.6 1071.7 783.3 C1069.2 767.1 1061.2 760.4 1070.0 751.7Z"/></clipPath>
<path d="M1070.0 751.7 C1078.8 742.9 1087.5 749.6 1106.7 748.3 C1125.8 747.1 1135.4 737.9 1146.7 746.7 C1157.9 755.4 1152.5 767.5 1151.7 783.3 C1150.8 799.2 1148.8 797.5 1143.3 810.0 C1137.9 822.5 1144.2 826.2 1130.0 833.3 C1115.8 840.4 1099.2 842.5 1086.7 838.3 C1074.2 834.2 1083.8 830.4 1080.0 816.7 C1076.2 802.9 1074.2 799.6 1071.7 783.3 C1069.2 767.1 1061.2 760.4 1070.0 751.7Z" fill="url(#tg)"/>
<path d="M1070.0 751.7 C1078.8 742.9 1087.5 749.6 1106.7 748.3 C1125.8 747.1 1135.4 737.9 1146.7 746.7 C1157.9 755.4 1152.5 767.5 1151.7 783.3 C1150.8 799.2 1148.8 797.5 1143.3 810.0 C1137.9 822.5 1144.2 826.2 1130.0 833.3 C1115.8 840.4 1099.2 842.5 1086.7 838.3 C1074.2 834.2 1083.8 830.4 1080.0 816.7 C1076.2 802.9 1074.2 799.6 1071.7 783.3 C1069.2 767.1 1061.2 760.4 1070.0 751.7Z" fill="none" stroke="#6f6344" stroke-width="10" opacity=".5" filter="url(#b3)" clip-path="url(#cL6)"/>
<path d="M1070.0 751.7 C1078.8 742.9 1087.5 749.6 1106.7 748.3 C1125.8 747.1 1135.4 737.9 1146.7 746.7 C1157.9 755.4 1152.5 767.5 1151.7 783.3 C1150.8 799.2 1148.8 797.5 1143.3 810.0 C1137.9 822.5 1144.2 826.2 1130.0 833.3 C1115.8 840.4 1099.2 842.5 1086.7 838.3 C1074.2 834.2 1083.8 830.4 1080.0 816.7 C1076.2 802.9 1074.2 799.6 1071.7 783.3 C1069.2 767.1 1061.2 760.4 1070.0 751.7Z" fill="none" stroke="#5f5438" stroke-width="1.2" opacity=".42"/>
<clipPath id="cL7"><path d="M1150.0 746.7 C1161.2 737.1 1172.5 745.4 1200.0 745.0 C1227.5 744.6 1244.2 735.4 1260.0 745.0 C1275.8 754.6 1264.2 765.4 1263.3 783.3 C1262.5 801.2 1260.8 800.8 1256.7 816.7 C1252.5 832.5 1267.5 839.2 1246.7 846.7 C1225.8 854.2 1195.0 852.5 1173.3 846.7 C1151.7 840.8 1164.6 839.2 1160.0 823.3 C1155.4 807.5 1157.5 802.5 1155.0 783.3 C1152.5 764.2 1138.8 756.2 1150.0 746.7Z"/></clipPath>
<path d="M1150.0 746.7 C1161.2 737.1 1172.5 745.4 1200.0 745.0 C1227.5 744.6 1244.2 735.4 1260.0 745.0 C1275.8 754.6 1264.2 765.4 1263.3 783.3 C1262.5 801.2 1260.8 800.8 1256.7 816.7 C1252.5 832.5 1267.5 839.2 1246.7 846.7 C1225.8 854.2 1195.0 852.5 1173.3 846.7 C1151.7 840.8 1164.6 839.2 1160.0 823.3 C1155.4 807.5 1157.5 802.5 1155.0 783.3 C1152.5 764.2 1138.8 756.2 1150.0 746.7Z" fill="url(#tg)"/>
<path d="M1150.0 746.7 C1161.2 737.1 1172.5 745.4 1200.0 745.0 C1227.5 744.6 1244.2 735.4 1260.0 745.0 C1275.8 754.6 1264.2 765.4 1263.3 783.3 C1262.5 801.2 1260.8 800.8 1256.7 816.7 C1252.5 832.5 1267.5 839.2 1246.7 846.7 C1225.8 854.2 1195.0 852.5 1173.3 846.7 C1151.7 840.8 1164.6 839.2 1160.0 823.3 C1155.4 807.5 1157.5 802.5 1155.0 783.3 C1152.5 764.2 1138.8 756.2 1150.0 746.7Z" fill="none" stroke="#6f6344" stroke-width="10" opacity=".5" filter="url(#b3)" clip-path="url(#cL7)"/>
<path d="M1150.0 746.7 C1161.2 737.1 1172.5 745.4 1200.0 745.0 C1227.5 744.6 1244.2 735.4 1260.0 745.0 C1275.8 754.6 1264.2 765.4 1263.3 783.3 C1262.5 801.2 1260.8 800.8 1256.7 816.7 C1252.5 832.5 1267.5 839.2 1246.7 846.7 C1225.8 854.2 1195.0 852.5 1173.3 846.7 C1151.7 840.8 1164.6 839.2 1160.0 823.3 C1155.4 807.5 1157.5 802.5 1155.0 783.3 C1152.5 764.2 1138.8 756.2 1150.0 746.7Z" fill="none" stroke="#5f5438" stroke-width="1.2" opacity=".42"/>
<clipPath id="cU15"><path d="M1496.7 630.0 C1510.8 615.8 1520.8 628.3 1540.0 626.7 C1559.2 625.0 1562.5 617.5 1573.3 623.3 C1584.2 629.2 1582.5 633.3 1583.3 650.0 C1584.2 666.7 1585.0 671.7 1576.7 690.0 C1568.3 708.3 1569.2 714.2 1550.0 723.3 C1530.8 732.5 1519.2 729.2 1500.0 726.7 C1480.8 724.2 1477.5 724.2 1473.3 713.3 C1469.2 702.5 1477.5 704.2 1483.3 683.3 C1489.2 662.5 1482.5 644.2 1496.7 630.0Z"/></clipPath>
<path d="M1496.7 630.0 C1510.8 615.8 1520.8 628.3 1540.0 626.7 C1559.2 625.0 1562.5 617.5 1573.3 623.3 C1584.2 629.2 1582.5 633.3 1583.3 650.0 C1584.2 666.7 1585.0 671.7 1576.7 690.0 C1568.3 708.3 1569.2 714.2 1550.0 723.3 C1530.8 732.5 1519.2 729.2 1500.0 726.7 C1480.8 724.2 1477.5 724.2 1473.3 713.3 C1469.2 702.5 1477.5 704.2 1483.3 683.3 C1489.2 662.5 1482.5 644.2 1496.7 630.0Z" fill="url(#tg)"/>
<path d="M1496.7 630.0 C1510.8 615.8 1520.8 628.3 1540.0 626.7 C1559.2 625.0 1562.5 617.5 1573.3 623.3 C1584.2 629.2 1582.5 633.3 1583.3 650.0 C1584.2 666.7 1585.0 671.7 1576.7 690.0 C1568.3 708.3 1569.2 714.2 1550.0 723.3 C1530.8 732.5 1519.2 729.2 1500.0 726.7 C1480.8 724.2 1477.5 724.2 1473.3 713.3 C1469.2 702.5 1477.5 704.2 1483.3 683.3 C1489.2 662.5 1482.5 644.2 1496.7 630.0Z" fill="none" stroke="#6f6344" stroke-width="10" opacity=".5" filter="url(#b3)" clip-path="url(#cU15)"/>
<path d="M1496.7 630.0 C1510.8 615.8 1520.8 628.3 1540.0 626.7 C1559.2 625.0 1562.5 617.5 1573.3 623.3 C1584.2 629.2 1582.5 633.3 1583.3 650.0 C1584.2 666.7 1585.0 671.7 1576.7 690.0 C1568.3 708.3 1569.2 714.2 1550.0 723.3 C1530.8 732.5 1519.2 729.2 1500.0 726.7 C1480.8 724.2 1477.5 724.2 1473.3 713.3 C1469.2 702.5 1477.5 704.2 1483.3 683.3 C1489.2 662.5 1482.5 644.2 1496.7 630.0Z" fill="none" stroke="#5f5438" stroke-width="1.2" opacity=".42"/>
<clipPath id="cU14"><path d="M1453.3 623.3 C1459.6 612.1 1462.5 620.4 1471.7 618.3 C1480.8 616.2 1484.2 608.8 1490.0 615.0 C1495.8 621.2 1496.7 623.8 1495.0 643.3 C1493.3 662.9 1492.1 675.0 1483.3 693.3 C1474.6 711.7 1470.8 710.8 1460.0 716.7 C1449.2 722.5 1446.7 718.3 1440.0 716.7 C1433.3 715.0 1431.7 723.3 1433.3 710.0 C1435.0 696.7 1441.7 685.0 1446.7 663.3 C1451.7 641.7 1447.1 634.6 1453.3 623.3Z"/></clipPath>
<path d="M1453.3 623.3 C1459.6 612.1 1462.5 620.4 1471.7 618.3 C1480.8 616.2 1484.2 608.8 1490.0 615.0 C1495.8 621.2 1496.7 623.8 1495.0 643.3 C1493.3 662.9 1492.1 675.0 1483.3 693.3 C1474.6 711.7 1470.8 710.8 1460.0 716.7 C1449.2 722.5 1446.7 718.3 1440.0 716.7 C1433.3 715.0 1431.7 723.3 1433.3 710.0 C1435.0 696.7 1441.7 685.0 1446.7 663.3 C1451.7 641.7 1447.1 634.6 1453.3 623.3Z" fill="url(#tg)"/>
<path d="M1453.3 623.3 C1459.6 612.1 1462.5 620.4 1471.7 618.3 C1480.8 616.2 1484.2 608.8 1490.0 615.0 C1495.8 621.2 1496.7 623.8 1495.0 643.3 C1493.3 662.9 1492.1 675.0 1483.3 693.3 C1474.6 711.7 1470.8 710.8 1460.0 716.7 C1449.2 722.5 1446.7 718.3 1440.0 716.7 C1433.3 715.0 1431.7 723.3 1433.3 710.0 C1435.0 696.7 1441.7 685.0 1446.7 663.3 C1451.7 641.7 1447.1 634.6 1453.3 623.3Z" fill="none" stroke="#6f6344" stroke-width="10" opacity=".5" filter="url(#b3)" clip-path="url(#cU14)"/>
<path d="M1453.3 623.3 C1459.6 612.1 1462.5 620.4 1471.7 618.3 C1480.8 616.2 1484.2 608.8 1490.0 615.0 C1495.8 621.2 1496.7 623.8 1495.0 643.3 C1493.3 662.9 1492.1 675.0 1483.3 693.3 C1474.6 711.7 1470.8 710.8 1460.0 716.7 C1449.2 722.5 1446.7 718.3 1440.0 716.7 C1433.3 715.0 1431.7 723.3 1433.3 710.0 C1435.0 696.7 1441.7 685.0 1446.7 663.3 C1451.7 641.7 1447.1 634.6 1453.3 623.3Z" fill="none" stroke="#5f5438" stroke-width="1.2" opacity=".42"/>
<clipPath id="cU13"><path d="M1406.7 606.7 C1412.1 591.2 1415.8 603.3 1425.0 601.7 C1434.2 600.0 1437.1 591.2 1443.3 600.0 C1449.6 608.8 1450.0 614.2 1450.0 636.7 C1450.0 659.2 1448.3 669.2 1443.3 690.0 C1438.3 710.8 1438.3 711.7 1430.0 720.0 C1421.7 728.3 1417.9 725.0 1410.0 723.3 C1402.1 721.7 1400.0 728.3 1398.3 713.3 C1396.7 698.3 1401.2 690.0 1403.3 663.3 C1405.4 636.7 1401.2 622.1 1406.7 606.7Z"/></clipPath>
<path d="M1406.7 606.7 C1412.1 591.2 1415.8 603.3 1425.0 601.7 C1434.2 600.0 1437.1 591.2 1443.3 600.0 C1449.6 608.8 1450.0 614.2 1450.0 636.7 C1450.0 659.2 1448.3 669.2 1443.3 690.0 C1438.3 710.8 1438.3 711.7 1430.0 720.0 C1421.7 728.3 1417.9 725.0 1410.0 723.3 C1402.1 721.7 1400.0 728.3 1398.3 713.3 C1396.7 698.3 1401.2 690.0 1403.3 663.3 C1405.4 636.7 1401.2 622.1 1406.7 606.7Z" fill="url(#tg)"/>
<path d="M1406.7 606.7 C1412.1 591.2 1415.8 603.3 1425.0 601.7 C1434.2 600.0 1437.1 591.2 1443.3 600.0 C1449.6 608.8 1450.0 614.2 1450.0 636.7 C1450.0 659.2 1448.3 669.2 1443.3 690.0 C1438.3 710.8 1438.3 711.7 1430.0 720.0 C1421.7 728.3 1417.9 725.0 1410.0 723.3 C1402.1 721.7 1400.0 728.3 1398.3 713.3 C1396.7 698.3 1401.2 690.0 1403.3 663.3 C1405.4 636.7 1401.2 622.1 1406.7 606.7Z" fill="none" stroke="#6f6344" stroke-width="10" opacity=".5" filter="url(#b3)" clip-path="url(#cU13)"/>
<path d="M1406.7 606.7 C1412.1 591.2 1415.8 603.3 1425.0 601.7 C1434.2 600.0 1437.1 591.2 1443.3 600.0 C1449.6 608.8 1450.0 614.2 1450.0 636.7 C1450.0 659.2 1448.3 669.2 1443.3 690.0 C1438.3 710.8 1438.3 711.7 1430.0 720.0 C1421.7 728.3 1417.9 725.0 1410.0 723.3 C1402.1 721.7 1400.0 728.3 1398.3 713.3 C1396.7 698.3 1401.2 690.0 1403.3 663.3 C1405.4 636.7 1401.2 622.1 1406.7 606.7Z" fill="none" stroke="#5f5438" stroke-width="1.2" opacity=".42"/>
<clipPath id="cU1"><path d="M821.7 620.0 C825.8 614.8 830.4 617.2 840.0 616.0 C849.6 614.8 852.1 609.8 860.0 615.0 C867.9 620.2 867.1 624.6 871.7 636.7 C876.2 648.8 876.2 651.7 878.3 663.3 C880.4 675.0 881.2 675.0 880.0 683.3 C878.8 691.7 880.8 693.8 873.3 696.7 C865.8 699.6 860.0 703.3 850.0 695.0 C840.0 686.7 840.0 677.9 833.3 663.3 C826.7 648.8 826.2 647.5 823.3 636.7 C820.4 625.8 817.5 625.2 821.7 620.0Z"/></clipPath>
<path d="M821.7 620.0 C825.8 614.8 830.4 617.2 840.0 616.0 C849.6 614.8 852.1 609.8 860.0 615.0 C867.9 620.2 867.1 624.6 871.7 636.7 C876.2 648.8 876.2 651.7 878.3 663.3 C880.4 675.0 881.2 675.0 880.0 683.3 C878.8 691.7 880.8 693.8 873.3 696.7 C865.8 699.6 860.0 703.3 850.0 695.0 C840.0 686.7 840.0 677.9 833.3 663.3 C826.7 648.8 826.2 647.5 823.3 636.7 C820.4 625.8 817.5 625.2 821.7 620.0Z" fill="url(#tg)"/>
<path d="M821.7 620.0 C825.8 614.8 830.4 617.2 840.0 616.0 C849.6 614.8 852.1 609.8 860.0 615.0 C867.9 620.2 867.1 624.6 871.7 636.7 C876.2 648.8 876.2 651.7 878.3 663.3 C880.4 675.0 881.2 675.0 880.0 683.3 C878.8 691.7 880.8 693.8 873.3 696.7 C865.8 699.6 860.0 703.3 850.0 695.0 C840.0 686.7 840.0 677.9 833.3 663.3 C826.7 648.8 826.2 647.5 823.3 636.7 C820.4 625.8 817.5 625.2 821.7 620.0Z" fill="none" stroke="#6f6344" stroke-width="10" opacity=".5" filter="url(#b3)" clip-path="url(#cU1)"/>
<path d="M821.7 620.0 C825.8 614.8 830.4 617.2 840.0 616.0 C849.6 614.8 852.1 609.8 860.0 615.0 C867.9 620.2 867.1 624.6 871.7 636.7 C876.2 648.8 876.2 651.7 878.3 663.3 C880.4 675.0 881.2 675.0 880.0 683.3 C878.8 691.7 880.8 693.8 873.3 696.7 C865.8 699.6 860.0 703.3 850.0 695.0 C840.0 686.7 840.0 677.9 833.3 663.3 C826.7 648.8 826.2 647.5 823.3 636.7 C820.4 625.8 817.5 625.2 821.7 620.0Z" fill="none" stroke="#5f5438" stroke-width="1.2" opacity=".42"/>
<clipPath id="cU3"><path d="M908.3 606.7 C911.7 598.5 918.8 604.4 930.0 604.0 C941.2 603.6 945.0 596.8 953.3 605.0 C961.7 613.2 961.7 622.1 963.3 636.7 C965.0 651.2 968.3 655.0 960.0 663.3 C951.7 671.7 940.8 676.7 930.0 670.0 C919.2 663.3 922.1 652.5 916.7 636.7 C911.2 620.8 905.0 614.8 908.3 606.7Z"/></clipPath>
<path d="M908.3 606.7 C911.7 598.5 918.8 604.4 930.0 604.0 C941.2 603.6 945.0 596.8 953.3 605.0 C961.7 613.2 961.7 622.1 963.3 636.7 C965.0 651.2 968.3 655.0 960.0 663.3 C951.7 671.7 940.8 676.7 930.0 670.0 C919.2 663.3 922.1 652.5 916.7 636.7 C911.2 620.8 905.0 614.8 908.3 606.7Z" fill="url(#tg)"/>
<path d="M908.3 606.7 C911.7 598.5 918.8 604.4 930.0 604.0 C941.2 603.6 945.0 596.8 953.3 605.0 C961.7 613.2 961.7 622.1 963.3 636.7 C965.0 651.2 968.3 655.0 960.0 663.3 C951.7 671.7 940.8 676.7 930.0 670.0 C919.2 663.3 922.1 652.5 916.7 636.7 C911.2 620.8 905.0 614.8 908.3 606.7Z" fill="none" stroke="#6f6344" stroke-width="10" opacity=".5" filter="url(#b3)" clip-path="url(#cU3)"/>
<path d="M908.3 606.7 C911.7 598.5 918.8 604.4 930.0 604.0 C941.2 603.6 945.0 596.8 953.3 605.0 C961.7 613.2 961.7 622.1 963.3 636.7 C965.0 651.2 968.3 655.0 960.0 663.3 C951.7 671.7 940.8 676.7 930.0 670.0 C919.2 663.3 922.1 652.5 916.7 636.7 C911.2 620.8 905.0 614.8 908.3 606.7Z" fill="none" stroke="#5f5438" stroke-width="1.2" opacity=".42"/>
<clipPath id="cU2"><path d="M860.0 610.0 C865.4 603.8 871.7 606.7 883.3 605.0 C895.0 603.3 898.3 598.8 906.7 603.3 C915.0 607.9 911.7 608.3 916.7 623.3 C921.7 638.3 916.7 649.2 926.7 663.3 C936.7 677.5 950.0 671.7 956.7 680.0 C963.3 688.3 964.2 691.7 953.3 696.7 C942.5 701.7 930.0 701.7 913.3 700.0 C896.7 698.3 897.5 700.8 886.7 690.0 C875.8 679.2 876.2 671.7 870.0 656.7 C863.8 641.7 864.2 641.7 861.7 630.0 C859.2 618.3 854.6 616.2 860.0 610.0Z"/></clipPath>
<path d="M860.0 610.0 C865.4 603.8 871.7 606.7 883.3 605.0 C895.0 603.3 898.3 598.8 906.7 603.3 C915.0 607.9 911.7 608.3 916.7 623.3 C921.7 638.3 916.7 649.2 926.7 663.3 C936.7 677.5 950.0 671.7 956.7 680.0 C963.3 688.3 964.2 691.7 953.3 696.7 C942.5 701.7 930.0 701.7 913.3 700.0 C896.7 698.3 897.5 700.8 886.7 690.0 C875.8 679.2 876.2 671.7 870.0 656.7 C863.8 641.7 864.2 641.7 861.7 630.0 C859.2 618.3 854.6 616.2 860.0 610.0Z" fill="url(#tg)"/>
<path d="M860.0 610.0 C865.4 603.8 871.7 606.7 883.3 605.0 C895.0 603.3 898.3 598.8 906.7 603.3 C915.0 607.9 911.7 608.3 916.7 623.3 C921.7 638.3 916.7 649.2 926.7 663.3 C936.7 677.5 950.0 671.7 956.7 680.0 C963.3 688.3 964.2 691.7 953.3 696.7 C942.5 701.7 930.0 701.7 913.3 700.0 C896.7 698.3 897.5 700.8 886.7 690.0 C875.8 679.2 876.2 671.7 870.0 656.7 C863.8 641.7 864.2 641.7 861.7 630.0 C859.2 618.3 854.6 616.2 860.0 610.0Z" fill="none" stroke="#6f6344" stroke-width="10" opacity=".5" filter="url(#b3)" clip-path="url(#cU2)"/>
<path d="M860.0 610.0 C865.4 603.8 871.7 606.7 883.3 605.0 C895.0 603.3 898.3 598.8 906.7 603.3 C915.0 607.9 911.7 608.3 916.7 623.3 C921.7 638.3 916.7 649.2 926.7 663.3 C936.7 677.5 950.0 671.7 956.7 680.0 C963.3 688.3 964.2 691.7 953.3 696.7 C942.5 701.7 930.0 701.7 913.3 700.0 C896.7 698.3 897.5 700.8 886.7 690.0 C875.8 679.2 876.2 671.7 870.0 656.7 C863.8 641.7 864.2 641.7 861.7 630.0 C859.2 618.3 854.6 616.2 860.0 610.0Z" fill="none" stroke="#5f5438" stroke-width="1.2" opacity=".42"/>
<clipPath id="cU4"><path d="M955.0 608.3 C960.0 600.7 965.4 606.4 976.7 606.0 C987.9 605.6 992.5 599.0 1000.0 606.7 C1007.5 614.3 1004.2 617.5 1006.7 636.7 C1009.2 655.8 1008.3 664.2 1010.0 683.3 C1011.7 702.5 1017.5 702.5 1013.3 713.3 C1009.2 724.2 1002.5 726.7 993.3 726.7 C984.2 726.7 984.2 725.8 976.7 713.3 C969.2 700.8 968.3 695.8 963.3 676.7 C958.3 657.5 958.8 653.8 956.7 636.7 C954.6 619.6 950.0 616.0 955.0 608.3Z"/></clipPath>
<path d="M955.0 608.3 C960.0 600.7 965.4 606.4 976.7 606.0 C987.9 605.6 992.5 599.0 1000.0 606.7 C1007.5 614.3 1004.2 617.5 1006.7 636.7 C1009.2 655.8 1008.3 664.2 1010.0 683.3 C1011.7 702.5 1017.5 702.5 1013.3 713.3 C1009.2 724.2 1002.5 726.7 993.3 726.7 C984.2 726.7 984.2 725.8 976.7 713.3 C969.2 700.8 968.3 695.8 963.3 676.7 C958.3 657.5 958.8 653.8 956.7 636.7 C954.6 619.6 950.0 616.0 955.0 608.3Z" fill="url(#tg)"/>
<path d="M955.0 608.3 C960.0 600.7 965.4 606.4 976.7 606.0 C987.9 605.6 992.5 599.0 1000.0 606.7 C1007.5 614.3 1004.2 617.5 1006.7 636.7 C1009.2 655.8 1008.3 664.2 1010.0 683.3 C1011.7 702.5 1017.5 702.5 1013.3 713.3 C1009.2 724.2 1002.5 726.7 993.3 726.7 C984.2 726.7 984.2 725.8 976.7 713.3 C969.2 700.8 968.3 695.8 963.3 676.7 C958.3 657.5 958.8 653.8 956.7 636.7 C954.6 619.6 950.0 616.0 955.0 608.3Z" fill="none" stroke="#6f6344" stroke-width="10" opacity=".5" filter="url(#b3)" clip-path="url(#cU4)"/>
<path d="M955.0 608.3 C960.0 600.7 965.4 606.4 976.7 606.0 C987.9 605.6 992.5 599.0 1000.0 606.7 C1007.5 614.3 1004.2 617.5 1006.7 636.7 C1009.2 655.8 1008.3 664.2 1010.0 683.3 C1011.7 702.5 1017.5 702.5 1013.3 713.3 C1009.2 724.2 1002.5 726.7 993.3 726.7 C984.2 726.7 984.2 725.8 976.7 713.3 C969.2 700.8 968.3 695.8 963.3 676.7 C958.3 657.5 958.8 653.8 956.7 636.7 C954.6 619.6 950.0 616.0 955.0 608.3Z" fill="none" stroke="#5f5438" stroke-width="1.2" opacity=".42"/>
<clipPath id="cU6"><path d="M1076.7 636.7 C1076.9 634.6 1077.2 628.0 1079.3 621.7 C1081.5 615.3 1079.3 615.1 1085.3 611.3 C1091.3 607.6 1094.2 607.2 1103.3 606.7 C1112.5 606.2 1115.2 605.6 1122.0 609.3 C1128.8 613.1 1127.4 614.8 1130.3 621.7 C1133.2 628.5 1132.9 617.1 1133.7 636.7 C1134.4 656.2 1134.2 675.8 1133.3 700.0 C1132.4 724.2 1132.5 723.3 1130.0 733.3 C1127.5 743.3 1136.7 739.2 1123.3 740.0 C1110.0 740.8 1090.8 740.8 1076.7 736.7 C1062.5 732.5 1068.3 741.7 1066.7 723.3 C1065.0 705.0 1067.1 686.7 1070.0 663.3 C1072.9 640.0 1076.7 636.7 1078.3 630.0 C1080.0 623.3 1076.4 638.8 1076.7 636.7Z"/></clipPath>
<path d="M1076.7 636.7 C1076.9 634.6 1077.2 628.0 1079.3 621.7 C1081.5 615.3 1079.3 615.1 1085.3 611.3 C1091.3 607.6 1094.2 607.2 1103.3 606.7 C1112.5 606.2 1115.2 605.6 1122.0 609.3 C1128.8 613.1 1127.4 614.8 1130.3 621.7 C1133.2 628.5 1132.9 617.1 1133.7 636.7 C1134.4 656.2 1134.2 675.8 1133.3 700.0 C1132.4 724.2 1132.5 723.3 1130.0 733.3 C1127.5 743.3 1136.7 739.2 1123.3 740.0 C1110.0 740.8 1090.8 740.8 1076.7 736.7 C1062.5 732.5 1068.3 741.7 1066.7 723.3 C1065.0 705.0 1067.1 686.7 1070.0 663.3 C1072.9 640.0 1076.7 636.7 1078.3 630.0 C1080.0 623.3 1076.4 638.8 1076.7 636.7Z" fill="url(#tg)"/>
<path d="M1076.7 636.7 C1076.9 634.6 1077.2 628.0 1079.3 621.7 C1081.5 615.3 1079.3 615.1 1085.3 611.3 C1091.3 607.6 1094.2 607.2 1103.3 606.7 C1112.5 606.2 1115.2 605.6 1122.0 609.3 C1128.8 613.1 1127.4 614.8 1130.3 621.7 C1133.2 628.5 1132.9 617.1 1133.7 636.7 C1134.4 656.2 1134.2 675.8 1133.3 700.0 C1132.4 724.2 1132.5 723.3 1130.0 733.3 C1127.5 743.3 1136.7 739.2 1123.3 740.0 C1110.0 740.8 1090.8 740.8 1076.7 736.7 C1062.5 732.5 1068.3 741.7 1066.7 723.3 C1065.0 705.0 1067.1 686.7 1070.0 663.3 C1072.9 640.0 1076.7 636.7 1078.3 630.0 C1080.0 623.3 1076.4 638.8 1076.7 636.7Z" fill="none" stroke="#6f6344" stroke-width="10" opacity=".5" filter="url(#b3)" clip-path="url(#cU6)"/>
<path d="M1076.7 636.7 C1076.9 634.6 1077.2 628.0 1079.3 621.7 C1081.5 615.3 1079.3 615.1 1085.3 611.3 C1091.3 607.6 1094.2 607.2 1103.3 606.7 C1112.5 606.2 1115.2 605.6 1122.0 609.3 C1128.8 613.1 1127.4 614.8 1130.3 621.7 C1133.2 628.5 1132.9 617.1 1133.7 636.7 C1134.4 656.2 1134.2 675.8 1133.3 700.0 C1132.4 724.2 1132.5 723.3 1130.0 733.3 C1127.5 743.3 1136.7 739.2 1123.3 740.0 C1110.0 740.8 1090.8 740.8 1076.7 736.7 C1062.5 732.5 1068.3 741.7 1066.7 723.3 C1065.0 705.0 1067.1 686.7 1070.0 663.3 C1072.9 640.0 1076.7 636.7 1078.3 630.0 C1080.0 623.3 1076.4 638.8 1076.7 636.7Z" fill="none" stroke="#5f5438" stroke-width="1.2" opacity=".42"/>
<clipPath id="cU7"><path d="M1139.7 640.0 C1140.9 625.4 1140.0 631.2 1142.3 625.0 C1144.7 618.8 1142.1 618.9 1149.0 615.3 C1155.9 611.8 1159.7 611.0 1170.0 610.7 C1180.3 610.3 1183.4 610.4 1190.3 614.0 C1197.2 617.6 1195.2 618.5 1197.7 625.0 C1200.2 631.5 1199.8 617.1 1200.3 640.0 C1200.9 662.9 1201.8 690.8 1200.0 716.7 C1198.2 742.5 1207.5 736.7 1193.3 743.3 C1179.2 750.0 1157.9 746.7 1143.3 743.3 C1128.8 740.0 1136.5 745.0 1135.0 730.0 C1133.5 715.0 1136.2 705.8 1137.3 683.3 C1138.5 660.8 1138.4 654.6 1139.7 640.0Z"/></clipPath>
<path d="M1139.7 640.0 C1140.9 625.4 1140.0 631.2 1142.3 625.0 C1144.7 618.8 1142.1 618.9 1149.0 615.3 C1155.9 611.8 1159.7 611.0 1170.0 610.7 C1180.3 610.3 1183.4 610.4 1190.3 614.0 C1197.2 617.6 1195.2 618.5 1197.7 625.0 C1200.2 631.5 1199.8 617.1 1200.3 640.0 C1200.9 662.9 1201.8 690.8 1200.0 716.7 C1198.2 742.5 1207.5 736.7 1193.3 743.3 C1179.2 750.0 1157.9 746.7 1143.3 743.3 C1128.8 740.0 1136.5 745.0 1135.0 730.0 C1133.5 715.0 1136.2 705.8 1137.3 683.3 C1138.5 660.8 1138.4 654.6 1139.7 640.0Z" fill="url(#tg)"/>
<path d="M1139.7 640.0 C1140.9 625.4 1140.0 631.2 1142.3 625.0 C1144.7 618.8 1142.1 618.9 1149.0 615.3 C1155.9 611.8 1159.7 611.0 1170.0 610.7 C1180.3 610.3 1183.4 610.4 1190.3 614.0 C1197.2 617.6 1195.2 618.5 1197.7 625.0 C1200.2 631.5 1199.8 617.1 1200.3 640.0 C1200.9 662.9 1201.8 690.8 1200.0 716.7 C1198.2 742.5 1207.5 736.7 1193.3 743.3 C1179.2 750.0 1157.9 746.7 1143.3 743.3 C1128.8 740.0 1136.5 745.0 1135.0 730.0 C1133.5 715.0 1136.2 705.8 1137.3 683.3 C1138.5 660.8 1138.4 654.6 1139.7 640.0Z" fill="none" stroke="#6f6344" stroke-width="10" opacity=".5" filter="url(#b3)" clip-path="url(#cU7)"/>
<path d="M1139.7 640.0 C1140.9 625.4 1140.0 631.2 1142.3 625.0 C1144.7 618.8 1142.1 618.9 1149.0 615.3 C1155.9 611.8 1159.7 611.0 1170.0 610.7 C1180.3 610.3 1183.4 610.4 1190.3 614.0 C1197.2 617.6 1195.2 618.5 1197.7 625.0 C1200.2 631.5 1199.8 617.1 1200.3 640.0 C1200.9 662.9 1201.8 690.8 1200.0 716.7 C1198.2 742.5 1207.5 736.7 1193.3 743.3 C1179.2 750.0 1157.9 746.7 1143.3 743.3 C1128.8 740.0 1136.5 745.0 1135.0 730.0 C1133.5 715.0 1136.2 705.8 1137.3 683.3 C1138.5 660.8 1138.4 654.6 1139.7 640.0Z" fill="none" stroke="#5f5438" stroke-width="1.2" opacity=".42"/>
<clipPath id="cU8"><path d="M1204.7 640.0 C1205.9 625.4 1205.2 631.3 1207.7 625.0 C1210.1 618.7 1207.9 618.6 1214.3 614.7 C1220.8 610.8 1223.4 609.8 1233.3 609.3 C1243.2 608.8 1246.7 608.8 1254.0 612.7 C1261.3 616.6 1259.6 618.2 1262.7 625.0 C1265.8 631.8 1265.3 615.4 1266.3 640.0 C1267.3 664.6 1268.2 697.5 1266.7 723.3 C1265.1 749.2 1274.2 737.9 1260.0 743.3 C1245.8 748.8 1224.6 748.3 1210.0 745.0 C1195.4 741.7 1203.5 745.4 1201.7 730.0 C1199.8 714.6 1201.9 705.8 1202.7 683.3 C1203.4 660.8 1203.4 654.6 1204.7 640.0Z"/></clipPath>
<path d="M1204.7 640.0 C1205.9 625.4 1205.2 631.3 1207.7 625.0 C1210.1 618.7 1207.9 618.6 1214.3 614.7 C1220.8 610.8 1223.4 609.8 1233.3 609.3 C1243.2 608.8 1246.7 608.8 1254.0 612.7 C1261.3 616.6 1259.6 618.2 1262.7 625.0 C1265.8 631.8 1265.3 615.4 1266.3 640.0 C1267.3 664.6 1268.2 697.5 1266.7 723.3 C1265.1 749.2 1274.2 737.9 1260.0 743.3 C1245.8 748.8 1224.6 748.3 1210.0 745.0 C1195.4 741.7 1203.5 745.4 1201.7 730.0 C1199.8 714.6 1201.9 705.8 1202.7 683.3 C1203.4 660.8 1203.4 654.6 1204.7 640.0Z" fill="url(#tg)"/>
<path d="M1204.7 640.0 C1205.9 625.4 1205.2 631.3 1207.7 625.0 C1210.1 618.7 1207.9 618.6 1214.3 614.7 C1220.8 610.8 1223.4 609.8 1233.3 609.3 C1243.2 608.8 1246.7 608.8 1254.0 612.7 C1261.3 616.6 1259.6 618.2 1262.7 625.0 C1265.8 631.8 1265.3 615.4 1266.3 640.0 C1267.3 664.6 1268.2 697.5 1266.7 723.3 C1265.1 749.2 1274.2 737.9 1260.0 743.3 C1245.8 748.8 1224.6 748.3 1210.0 745.0 C1195.4 741.7 1203.5 745.4 1201.7 730.0 C1199.8 714.6 1201.9 705.8 1202.7 683.3 C1203.4 660.8 1203.4 654.6 1204.7 640.0Z" fill="none" stroke="#6f6344" stroke-width="10" opacity=".5" filter="url(#b3)" clip-path="url(#cU8)"/>
<path d="M1204.7 640.0 C1205.9 625.4 1205.2 631.3 1207.7 625.0 C1210.1 618.7 1207.9 618.6 1214.3 614.7 C1220.8 610.8 1223.4 609.8 1233.3 609.3 C1243.2 608.8 1246.7 608.8 1254.0 612.7 C1261.3 616.6 1259.6 618.2 1262.7 625.0 C1265.8 631.8 1265.3 615.4 1266.3 640.0 C1267.3 664.6 1268.2 697.5 1266.7 723.3 C1265.1 749.2 1274.2 737.9 1260.0 743.3 C1245.8 748.8 1224.6 748.3 1210.0 745.0 C1195.4 741.7 1203.5 745.4 1201.7 730.0 C1199.8 714.6 1201.9 705.8 1202.7 683.3 C1203.4 660.8 1203.4 654.6 1204.7 640.0Z" fill="none" stroke="#5f5438" stroke-width="1.2" opacity=".42"/>
<clipPath id="cU9"><path d="M1138.0 641.7 C1138.7 631.7 1138.3 632.9 1141.0 626.7 C1143.7 620.4 1141.0 620.3 1148.7 616.7 C1156.3 613.0 1160.5 612.2 1171.7 612.0 C1182.8 611.8 1186.5 612.3 1193.3 616.0 C1200.2 619.7 1197.2 620.2 1199.0 626.7 C1200.8 633.1 1200.0 619.2 1200.7 641.7 C1201.3 664.2 1202.7 692.1 1201.7 716.7 C1200.7 741.3 1199.6 732.9 1196.7 740.0 C1193.8 747.1 1203.3 744.2 1190.0 745.0 C1176.7 745.8 1157.1 747.1 1143.3 743.3 C1129.6 739.6 1136.2 749.2 1135.0 730.0 C1133.8 710.8 1137.6 688.8 1138.3 666.7 C1139.1 644.6 1137.3 651.7 1138.0 641.7Z"/></clipPath>
<path d="M1138.0 641.7 C1138.7 631.7 1138.3 632.9 1141.0 626.7 C1143.7 620.4 1141.0 620.3 1148.7 616.7 C1156.3 613.0 1160.5 612.2 1171.7 612.0 C1182.8 611.8 1186.5 612.3 1193.3 616.0 C1200.2 619.7 1197.2 620.2 1199.0 626.7 C1200.8 633.1 1200.0 619.2 1200.7 641.7 C1201.3 664.2 1202.7 692.1 1201.7 716.7 C1200.7 741.3 1199.6 732.9 1196.7 740.0 C1193.8 747.1 1203.3 744.2 1190.0 745.0 C1176.7 745.8 1157.1 747.1 1143.3 743.3 C1129.6 739.6 1136.2 749.2 1135.0 730.0 C1133.8 710.8 1137.6 688.8 1138.3 666.7 C1139.1 644.6 1137.3 651.7 1138.0 641.7Z" fill="url(#tg)"/>
<path d="M1138.0 641.7 C1138.7 631.7 1138.3 632.9 1141.0 626.7 C1143.7 620.4 1141.0 620.3 1148.7 616.7 C1156.3 613.0 1160.5 612.2 1171.7 612.0 C1182.8 611.8 1186.5 612.3 1193.3 616.0 C1200.2 619.7 1197.2 620.2 1199.0 626.7 C1200.8 633.1 1200.0 619.2 1200.7 641.7 C1201.3 664.2 1202.7 692.1 1201.7 716.7 C1200.7 741.3 1199.6 732.9 1196.7 740.0 C1193.8 747.1 1203.3 744.2 1190.0 745.0 C1176.7 745.8 1157.1 747.1 1143.3 743.3 C1129.6 739.6 1136.2 749.2 1135.0 730.0 C1133.8 710.8 1137.6 688.8 1138.3 666.7 C1139.1 644.6 1137.3 651.7 1138.0 641.7Z" fill="none" stroke="#6f6344" stroke-width="10" opacity=".5" filter="url(#b3)" clip-path="url(#cU9)"/>
<path d="M1138.0 641.7 C1138.7 631.7 1138.3 632.9 1141.0 626.7 C1143.7 620.4 1141.0 620.3 1148.7 616.7 C1156.3 613.0 1160.5 612.2 1171.7 612.0 C1182.8 611.8 1186.5 612.3 1193.3 616.0 C1200.2 619.7 1197.2 620.2 1199.0 626.7 C1200.8 633.1 1200.0 619.2 1200.7 641.7 C1201.3 664.2 1202.7 692.1 1201.7 716.7 C1200.7 741.3 1199.6 732.9 1196.7 740.0 C1193.8 747.1 1203.3 744.2 1190.0 745.0 C1176.7 745.8 1157.1 747.1 1143.3 743.3 C1129.6 739.6 1136.2 749.2 1135.0 730.0 C1133.8 710.8 1137.6 688.8 1138.3 666.7 C1139.1 644.6 1137.3 651.7 1138.0 641.7Z" fill="none" stroke="#5f5438" stroke-width="1.2" opacity=".42"/>
<clipPath id="cU10"><path d="M1204.3 641.7 C1204.9 632.5 1204.4 633.4 1207.3 626.7 C1210.2 619.9 1209.1 619.2 1216.0 614.7 C1222.9 610.2 1225.5 609.2 1235.0 608.7 C1244.5 608.2 1247.2 608.2 1254.0 612.7 C1260.8 617.2 1259.2 619.4 1262.0 626.7 C1264.8 633.9 1264.2 619.2 1265.3 641.7 C1266.5 664.2 1268.0 691.3 1266.7 716.7 C1265.3 742.1 1274.2 736.2 1260.0 743.3 C1245.8 750.4 1224.2 747.5 1210.0 745.0 C1195.8 742.5 1204.6 753.7 1203.3 733.3 C1202.1 712.9 1204.8 686.2 1205.0 663.3 C1205.2 640.4 1203.8 650.8 1204.3 641.7Z"/></clipPath>
<path d="M1204.3 641.7 C1204.9 632.5 1204.4 633.4 1207.3 626.7 C1210.2 619.9 1209.1 619.2 1216.0 614.7 C1222.9 610.2 1225.5 609.2 1235.0 608.7 C1244.5 608.2 1247.2 608.2 1254.0 612.7 C1260.8 617.2 1259.2 619.4 1262.0 626.7 C1264.8 633.9 1264.2 619.2 1265.3 641.7 C1266.5 664.2 1268.0 691.3 1266.7 716.7 C1265.3 742.1 1274.2 736.2 1260.0 743.3 C1245.8 750.4 1224.2 747.5 1210.0 745.0 C1195.8 742.5 1204.6 753.7 1203.3 733.3 C1202.1 712.9 1204.8 686.2 1205.0 663.3 C1205.2 640.4 1203.8 650.8 1204.3 641.7Z" fill="url(#tg)"/>
<path d="M1204.3 641.7 C1204.9 632.5 1204.4 633.4 1207.3 626.7 C1210.2 619.9 1209.1 619.2 1216.0 614.7 C1222.9 610.2 1225.5 609.2 1235.0 608.7 C1244.5 608.2 1247.2 608.2 1254.0 612.7 C1260.8 617.2 1259.2 619.4 1262.0 626.7 C1264.8 633.9 1264.2 619.2 1265.3 641.7 C1266.5 664.2 1268.0 691.3 1266.7 716.7 C1265.3 742.1 1274.2 736.2 1260.0 743.3 C1245.8 750.4 1224.2 747.5 1210.0 745.0 C1195.8 742.5 1204.6 753.7 1203.3 733.3 C1202.1 712.9 1204.8 686.2 1205.0 663.3 C1205.2 640.4 1203.8 650.8 1204.3 641.7Z" fill="none" stroke="#6f6344" stroke-width="10" opacity=".5" filter="url(#b3)" clip-path="url(#cU10)"/>
<path d="M1204.3 641.7 C1204.9 632.5 1204.4 633.4 1207.3 626.7 C1210.2 619.9 1209.1 619.2 1216.0 614.7 C1222.9 610.2 1225.5 609.2 1235.0 608.7 C1244.5 608.2 1247.2 608.2 1254.0 612.7 C1260.8 617.2 1259.2 619.4 1262.0 626.7 C1264.8 633.9 1264.2 619.2 1265.3 641.7 C1266.5 664.2 1268.0 691.3 1266.7 716.7 C1265.3 742.1 1274.2 736.2 1260.0 743.3 C1245.8 750.4 1224.2 747.5 1210.0 745.0 C1195.8 742.5 1204.6 753.7 1203.3 733.3 C1202.1 712.9 1204.8 686.2 1205.0 663.3 C1205.2 640.4 1203.8 650.8 1204.3 641.7Z" fill="none" stroke="#5f5438" stroke-width="1.2" opacity=".42"/>
<clipPath id="cU11"><path d="M1270.3 643.3 C1270.8 634.2 1271.1 636.0 1273.3 630.0 C1275.6 624.0 1272.7 623.7 1279.3 619.3 C1286.0 615.0 1289.7 613.5 1300.0 612.7 C1310.3 611.8 1313.7 611.7 1320.7 616.0 C1327.7 620.3 1325.5 623.2 1328.0 630.0 C1330.5 636.8 1329.3 621.7 1330.7 643.3 C1332.0 665.0 1334.3 692.5 1333.3 716.7 C1332.3 740.8 1340.8 732.9 1326.7 740.0 C1312.5 747.1 1291.3 746.7 1276.7 745.0 C1262.1 743.3 1269.6 752.9 1268.3 733.3 C1267.1 713.7 1271.2 689.2 1271.7 666.7 C1272.2 644.2 1269.9 652.5 1270.3 643.3Z"/></clipPath>
<path d="M1270.3 643.3 C1270.8 634.2 1271.1 636.0 1273.3 630.0 C1275.6 624.0 1272.7 623.7 1279.3 619.3 C1286.0 615.0 1289.7 613.5 1300.0 612.7 C1310.3 611.8 1313.7 611.7 1320.7 616.0 C1327.7 620.3 1325.5 623.2 1328.0 630.0 C1330.5 636.8 1329.3 621.7 1330.7 643.3 C1332.0 665.0 1334.3 692.5 1333.3 716.7 C1332.3 740.8 1340.8 732.9 1326.7 740.0 C1312.5 747.1 1291.3 746.7 1276.7 745.0 C1262.1 743.3 1269.6 752.9 1268.3 733.3 C1267.1 713.7 1271.2 689.2 1271.7 666.7 C1272.2 644.2 1269.9 652.5 1270.3 643.3Z" fill="url(#tg)"/>
<path d="M1270.3 643.3 C1270.8 634.2 1271.1 636.0 1273.3 630.0 C1275.6 624.0 1272.7 623.7 1279.3 619.3 C1286.0 615.0 1289.7 613.5 1300.0 612.7 C1310.3 611.8 1313.7 611.7 1320.7 616.0 C1327.7 620.3 1325.5 623.2 1328.0 630.0 C1330.5 636.8 1329.3 621.7 1330.7 643.3 C1332.0 665.0 1334.3 692.5 1333.3 716.7 C1332.3 740.8 1340.8 732.9 1326.7 740.0 C1312.5 747.1 1291.3 746.7 1276.7 745.0 C1262.1 743.3 1269.6 752.9 1268.3 733.3 C1267.1 713.7 1271.2 689.2 1271.7 666.7 C1272.2 644.2 1269.9 652.5 1270.3 643.3Z" fill="none" stroke="#6f6344" stroke-width="10" opacity=".5" filter="url(#b3)" clip-path="url(#cU11)"/>
<path d="M1270.3 643.3 C1270.8 634.2 1271.1 636.0 1273.3 630.0 C1275.6 624.0 1272.7 623.7 1279.3 619.3 C1286.0 615.0 1289.7 613.5 1300.0 612.7 C1310.3 611.8 1313.7 611.7 1320.7 616.0 C1327.7 620.3 1325.5 623.2 1328.0 630.0 C1330.5 636.8 1329.3 621.7 1330.7 643.3 C1332.0 665.0 1334.3 692.5 1333.3 716.7 C1332.3 740.8 1340.8 732.9 1326.7 740.0 C1312.5 747.1 1291.3 746.7 1276.7 745.0 C1262.1 743.3 1269.6 752.9 1268.3 733.3 C1267.1 713.7 1271.2 689.2 1271.7 666.7 C1272.2 644.2 1269.9 652.5 1270.3 643.3Z" fill="none" stroke="#5f5438" stroke-width="1.2" opacity=".42"/>
<clipPath id="cU12"><path d="M1340.0 623.3 C1348.3 610.8 1354.2 610.0 1366.7 600.0 C1379.2 590.0 1381.7 585.8 1390.0 583.3 C1398.3 580.8 1396.2 573.3 1400.0 590.0 C1403.8 606.7 1405.0 621.7 1405.0 650.0 C1405.0 678.3 1405.4 682.5 1400.0 703.3 C1394.6 724.2 1391.7 724.2 1383.3 733.3 C1375.0 742.5 1375.0 741.7 1366.7 740.0 C1358.3 738.3 1357.5 740.8 1350.0 726.7 C1342.5 712.5 1340.8 702.5 1336.7 683.3 C1332.5 664.2 1332.5 665.0 1333.3 650.0 C1334.2 635.0 1331.7 635.8 1340.0 623.3Z"/></clipPath>
<path d="M1340.0 623.3 C1348.3 610.8 1354.2 610.0 1366.7 600.0 C1379.2 590.0 1381.7 585.8 1390.0 583.3 C1398.3 580.8 1396.2 573.3 1400.0 590.0 C1403.8 606.7 1405.0 621.7 1405.0 650.0 C1405.0 678.3 1405.4 682.5 1400.0 703.3 C1394.6 724.2 1391.7 724.2 1383.3 733.3 C1375.0 742.5 1375.0 741.7 1366.7 740.0 C1358.3 738.3 1357.5 740.8 1350.0 726.7 C1342.5 712.5 1340.8 702.5 1336.7 683.3 C1332.5 664.2 1332.5 665.0 1333.3 650.0 C1334.2 635.0 1331.7 635.8 1340.0 623.3Z" fill="url(#tg)"/>
<path d="M1340.0 623.3 C1348.3 610.8 1354.2 610.0 1366.7 600.0 C1379.2 590.0 1381.7 585.8 1390.0 583.3 C1398.3 580.8 1396.2 573.3 1400.0 590.0 C1403.8 606.7 1405.0 621.7 1405.0 650.0 C1405.0 678.3 1405.4 682.5 1400.0 703.3 C1394.6 724.2 1391.7 724.2 1383.3 733.3 C1375.0 742.5 1375.0 741.7 1366.7 740.0 C1358.3 738.3 1357.5 740.8 1350.0 726.7 C1342.5 712.5 1340.8 702.5 1336.7 683.3 C1332.5 664.2 1332.5 665.0 1333.3 650.0 C1334.2 635.0 1331.7 635.8 1340.0 623.3Z" fill="none" stroke="#6f6344" stroke-width="10" opacity=".5" filter="url(#b3)" clip-path="url(#cU12)"/>
<path d="M1340.0 623.3 C1348.3 610.8 1354.2 610.0 1366.7 600.0 C1379.2 590.0 1381.7 585.8 1390.0 583.3 C1398.3 580.8 1396.2 573.3 1400.0 590.0 C1403.8 606.7 1405.0 621.7 1405.0 650.0 C1405.0 678.3 1405.4 682.5 1400.0 703.3 C1394.6 724.2 1391.7 724.2 1383.3 733.3 C1375.0 742.5 1375.0 741.7 1366.7 740.0 C1358.3 738.3 1357.5 740.8 1350.0 726.7 C1342.5 712.5 1340.8 702.5 1336.7 683.3 C1332.5 664.2 1332.5 665.0 1333.3 650.0 C1334.2 635.0 1331.7 635.8 1340.0 623.3Z" fill="none" stroke="#5f5438" stroke-width="1.2" opacity=".42"/>
<clipPath id="cU5"><path d="M1005.0 593.3 C1012.9 586.7 1017.1 589.2 1033.3 596.7 C1049.6 604.2 1060.4 605.8 1070.0 623.3 C1079.6 640.8 1073.3 644.2 1071.7 666.7 C1070.0 689.2 1070.4 696.7 1063.3 713.3 C1056.2 730.0 1051.7 728.7 1043.3 733.3 C1035.0 737.9 1036.7 737.5 1030.0 731.7 C1023.3 725.8 1022.5 727.1 1016.7 710.0 C1010.8 692.9 1010.4 685.0 1006.7 663.3 C1002.9 641.7 1002.1 640.8 1001.7 623.3 C1001.2 605.8 997.1 600.0 1005.0 593.3Z"/></clipPath>
<path d="M1005.0 593.3 C1012.9 586.7 1017.1 589.2 1033.3 596.7 C1049.6 604.2 1060.4 605.8 1070.0 623.3 C1079.6 640.8 1073.3 644.2 1071.7 666.7 C1070.0 689.2 1070.4 696.7 1063.3 713.3 C1056.2 730.0 1051.7 728.7 1043.3 733.3 C1035.0 737.9 1036.7 737.5 1030.0 731.7 C1023.3 725.8 1022.5 727.1 1016.7 710.0 C1010.8 692.9 1010.4 685.0 1006.7 663.3 C1002.9 641.7 1002.1 640.8 1001.7 623.3 C1001.2 605.8 997.1 600.0 1005.0 593.3Z" fill="url(#tg)"/>
<path d="M1005.0 593.3 C1012.9 586.7 1017.1 589.2 1033.3 596.7 C1049.6 604.2 1060.4 605.8 1070.0 623.3 C1079.6 640.8 1073.3 644.2 1071.7 666.7 C1070.0 689.2 1070.4 696.7 1063.3 713.3 C1056.2 730.0 1051.7 728.7 1043.3 733.3 C1035.0 737.9 1036.7 737.5 1030.0 731.7 C1023.3 725.8 1022.5 727.1 1016.7 710.0 C1010.8 692.9 1010.4 685.0 1006.7 663.3 C1002.9 641.7 1002.1 640.8 1001.7 623.3 C1001.2 605.8 997.1 600.0 1005.0 593.3Z" fill="none" stroke="#6f6344" stroke-width="10" opacity=".5" filter="url(#b3)" clip-path="url(#cU5)"/>
<path d="M1005.0 593.3 C1012.9 586.7 1017.1 589.2 1033.3 596.7 C1049.6 604.2 1060.4 605.8 1070.0 623.3 C1079.6 640.8 1073.3 644.2 1071.7 666.7 C1070.0 689.2 1070.4 696.7 1063.3 713.3 C1056.2 730.0 1051.7 728.7 1043.3 733.3 C1035.0 737.9 1036.7 737.5 1030.0 731.7 C1023.3 725.8 1022.5 727.1 1016.7 710.0 C1010.8 692.9 1010.4 685.0 1006.7 663.3 C1002.9 641.7 1002.1 640.8 1001.7 623.3 C1001.2 605.8 997.1 600.0 1005.0 593.3Z" fill="none" stroke="#5f5438" stroke-width="1.2" opacity=".42"/>
<path d="M821.7 620.0 C825.8 614.8 830.4 617.2 840.0 616.0 C849.6 614.8 852.1 609.8 860.0 615.0 C867.9 620.2 867.1 624.6 871.7 636.7 C876.2 648.8 876.2 651.7 878.3 663.3 C880.4 675.0 881.2 675.0 880.0 683.3 C878.8 691.7 880.8 693.8 873.3 696.7 C865.8 699.6 860.0 703.3 850.0 695.0 C840.0 686.7 840.0 677.9 833.3 663.3 C826.7 648.8 826.2 647.5 823.3 636.7 C820.4 625.8 817.5 625.2 821.7 620.0Z" fill="#4a3b1e" opacity=".09"/>
<path d="M860.0 610.0 C865.4 603.8 871.7 606.7 883.3 605.0 C895.0 603.3 898.3 598.8 906.7 603.3 C915.0 607.9 911.7 608.3 916.7 623.3 C921.7 638.3 916.7 649.2 926.7 663.3 C936.7 677.5 950.0 671.7 956.7 680.0 C963.3 688.3 964.2 691.7 953.3 696.7 C942.5 701.7 930.0 701.7 913.3 700.0 C896.7 698.3 897.5 700.8 886.7 690.0 C875.8 679.2 876.2 671.7 870.0 656.7 C863.8 641.7 864.2 641.7 861.7 630.0 C859.2 618.3 854.6 616.2 860.0 610.0Z" fill="#4a3b1e" opacity=".09"/>
<path d="M908.3 606.7 C911.7 598.5 918.8 604.4 930.0 604.0 C941.2 603.6 945.0 596.8 953.3 605.0 C961.7 613.2 961.7 622.1 963.3 636.7 C965.0 651.2 968.3 655.0 960.0 663.3 C951.7 671.7 940.8 676.7 930.0 670.0 C919.2 663.3 922.1 652.5 916.7 636.7 C911.2 620.8 905.0 614.8 908.3 606.7Z" fill="#4a3b1e" opacity=".09"/>
<path d="M955.0 608.3 C960.0 600.7 965.4 606.4 976.7 606.0 C987.9 605.6 992.5 599.0 1000.0 606.7 C1007.5 614.3 1004.2 617.5 1006.7 636.7 C1009.2 655.8 1008.3 664.2 1010.0 683.3 C1011.7 702.5 1017.5 702.5 1013.3 713.3 C1009.2 724.2 1002.5 726.7 993.3 726.7 C984.2 726.7 984.2 725.8 976.7 713.3 C969.2 700.8 968.3 695.8 963.3 676.7 C958.3 657.5 958.8 653.8 956.7 636.7 C954.6 619.6 950.0 616.0 955.0 608.3Z" fill="#4a3b1e" opacity=".09"/>
<path d="M801.7 713.3 C803.3 696.7 802.1 703.8 810.0 700.0 C817.9 696.2 824.2 695.0 833.3 698.3 C842.5 701.7 842.9 700.4 846.7 713.3 C850.4 726.2 848.3 730.8 848.3 750.0 C848.3 769.2 850.4 777.5 846.7 790.0 C842.9 802.5 841.2 796.7 833.3 800.0 C825.4 803.3 822.5 811.7 815.0 803.3 C807.5 795.0 806.7 789.2 803.3 766.7 C800.0 744.2 800.0 730.0 801.7 713.3Z" fill="#4a3b1e" opacity=".09"/>
<path d="M850.0 706.7 C856.2 697.1 860.8 698.3 873.3 698.3 C885.8 698.3 891.7 697.9 900.0 706.7 C908.3 715.4 905.8 712.5 906.7 733.3 C907.5 754.2 908.3 772.5 903.3 790.0 C898.3 807.5 898.3 800.0 886.7 803.3 C875.0 806.7 866.2 808.3 856.7 803.3 C847.1 798.3 850.4 800.0 848.3 783.3 C846.2 766.7 847.9 755.8 848.3 736.7 C848.8 717.5 843.8 716.3 850.0 706.7Z" fill="#4a3b1e" opacity=".09"/>
<path d="M906.7 716.7 C912.5 695.8 916.7 700.8 926.7 700.0 C936.7 699.2 940.0 700.8 946.7 713.3 C953.3 725.8 952.5 728.3 953.3 750.0 C954.2 771.7 955.0 785.0 950.0 800.0 C945.0 815.0 943.3 807.5 933.3 810.0 C923.3 812.5 917.5 816.7 910.0 810.0 C902.5 803.3 904.2 806.7 903.3 783.3 C902.5 760.0 900.8 737.5 906.7 716.7Z" fill="#4a3b1e" opacity=".09"/>
<path d="M953.3 716.7 C957.1 697.5 956.7 704.2 966.7 706.7 C976.7 709.2 983.3 717.5 993.3 726.7 C1003.3 735.8 1003.8 729.2 1006.7 743.3 C1009.6 757.5 1006.7 765.0 1005.0 783.3 C1003.3 801.7 1011.2 808.3 1000.0 816.7 C988.8 825.0 972.1 825.0 960.0 816.7 C947.9 808.3 953.3 808.3 951.7 783.3 C950.0 758.3 949.6 735.8 953.3 716.7Z" fill="#4a3b1e" opacity=".09"/>
<path d="M1406.7 606.7 C1412.1 591.2 1415.8 603.3 1425.0 601.7 C1434.2 600.0 1437.1 591.2 1443.3 600.0 C1449.6 608.8 1450.0 614.2 1450.0 636.7 C1450.0 659.2 1448.3 669.2 1443.3 690.0 C1438.3 710.8 1438.3 711.7 1430.0 720.0 C1421.7 728.3 1417.9 725.0 1410.0 723.3 C1402.1 721.7 1400.0 728.3 1398.3 713.3 C1396.7 698.3 1401.2 690.0 1403.3 663.3 C1405.4 636.7 1401.2 622.1 1406.7 606.7Z" fill="#4a3b1e" opacity=".10"/>
<path d="M1453.3 623.3 C1459.6 612.1 1462.5 620.4 1471.7 618.3 C1480.8 616.2 1484.2 608.8 1490.0 615.0 C1495.8 621.2 1496.7 623.8 1495.0 643.3 C1493.3 662.9 1492.1 675.0 1483.3 693.3 C1474.6 711.7 1470.8 710.8 1460.0 716.7 C1449.2 722.5 1446.7 718.3 1440.0 716.7 C1433.3 715.0 1431.7 723.3 1433.3 710.0 C1435.0 696.7 1441.7 685.0 1446.7 663.3 C1451.7 641.7 1447.1 634.6 1453.3 623.3Z" fill="#4a3b1e" opacity=".10"/>
<path d="M1496.7 630.0 C1510.8 615.8 1520.8 628.3 1540.0 626.7 C1559.2 625.0 1562.5 617.5 1573.3 623.3 C1584.2 629.2 1582.5 633.3 1583.3 650.0 C1584.2 666.7 1585.0 671.7 1576.7 690.0 C1568.3 708.3 1569.2 714.2 1550.0 723.3 C1530.8 732.5 1519.2 729.2 1500.0 726.7 C1480.8 724.2 1477.5 724.2 1473.3 713.3 C1469.2 702.5 1477.5 704.2 1483.3 683.3 C1489.2 662.5 1482.5 644.2 1496.7 630.0Z" fill="#4a3b1e" opacity=".10"/>
<path d="M1443.3 733.3 C1448.3 717.5 1452.5 721.7 1463.3 720.0 C1474.2 718.3 1478.3 719.2 1486.7 726.7 C1495.0 734.2 1493.3 734.2 1496.7 750.0 C1500.0 765.8 1500.0 770.0 1500.0 790.0 C1500.0 810.0 1500.0 818.3 1496.7 830.0 C1493.3 841.7 1500.8 837.5 1486.7 836.7 C1472.5 835.8 1450.8 840.0 1440.0 826.7 C1429.2 813.3 1442.5 806.7 1443.3 783.3 C1444.2 760.0 1438.3 749.2 1443.3 733.3Z" fill="#4a3b1e" opacity=".10"/>
</g>
<ellipse cx="1080" cy="680" rx="5" ry="22" fill="#f3ecd4" opacity="0.70" filter="url(#b3)" transform="rotate(-8 1080 680)"/>
<ellipse cx="1080" cy="680" rx="1.6" ry="15" fill="#fbf6e4" opacity="0.56" filter="url(#b1)" transform="rotate(-8 1080 680)"/>
<ellipse cx="1172" cy="690" rx="6" ry="24" fill="#f3ecd4" opacity="0.75" filter="url(#b3)" transform="rotate(8 1172 690)"/>
<ellipse cx="1172" cy="690" rx="1.6" ry="16" fill="#fbf6e4" opacity="0.60" filter="url(#b1)" transform="rotate(8 1172 690)"/>
<ellipse cx="1236" cy="688" rx="6" ry="24" fill="#f3ecd4" opacity="0.75" filter="url(#b3)" transform="rotate(8 1236 688)"/>
<ellipse cx="1236" cy="688" rx="1.6" ry="16" fill="#fbf6e4" opacity="0.60" filter="url(#b1)" transform="rotate(8 1236 688)"/>
<ellipse cx="1300" cy="685" rx="5" ry="24" fill="#f3ecd4" opacity="0.70" filter="url(#b3)" transform="rotate(0 1300 685)"/>
<ellipse cx="1300" cy="685" rx="1.6" ry="16" fill="#fbf6e4" opacity="0.56" filter="url(#b1)" transform="rotate(0 1300 685)"/>
<ellipse cx="1038" cy="675" rx="5" ry="26" fill="#f3ecd4" opacity="0.60" filter="url(#b3)" transform="rotate(-4 1038 675)"/>
<ellipse cx="1038" cy="675" rx="1.6" ry="18" fill="#fbf6e4" opacity="0.48" filter="url(#b1)" transform="rotate(-4 1038 675)"/>
<ellipse cx="1375" cy="680" rx="6" ry="26" fill="#f3ecd4" opacity="0.65" filter="url(#b3)" transform="rotate(10 1375 680)"/>
<ellipse cx="1375" cy="680" rx="1.6" ry="18" fill="#fbf6e4" opacity="0.52" filter="url(#b1)" transform="rotate(10 1375 680)"/>
<ellipse cx="1430" cy="690" rx="5" ry="22" fill="#f3ecd4" opacity="0.45" filter="url(#b3)" transform="rotate(5 1430 690)"/>
<ellipse cx="1430" cy="690" rx="1.6" ry="15" fill="#fbf6e4" opacity="0.36" filter="url(#b1)" transform="rotate(5 1430 690)"/>
<ellipse cx="1132" cy="785" rx="4" ry="14" fill="#f3ecd4" opacity="0.55" filter="url(#b3)" transform="rotate(-8 1132 785)"/>
<ellipse cx="1132" cy="785" rx="1.6" ry="9" fill="#fbf6e4" opacity="0.44" filter="url(#b1)" transform="rotate(-8 1132 785)"/>
<ellipse cx="1226" cy="785" rx="5" ry="16" fill="#f3ecd4" opacity="0.60" filter="url(#b3)" transform="rotate(12 1226 785)"/>
<ellipse cx="1226" cy="785" rx="1.6" ry="11" fill="#fbf6e4" opacity="0.48" filter="url(#b1)" transform="rotate(12 1226 785)"/>
<ellipse cx="1308" cy="782" rx="4" ry="13" fill="#f3ecd4" opacity="0.55" filter="url(#b3)" transform="rotate(-10 1308 782)"/>
<ellipse cx="1308" cy="782" rx="1.6" ry="9" fill="#fbf6e4" opacity="0.44" filter="url(#b1)" transform="rotate(-10 1308 782)"/>
<ellipse cx="1398" cy="785" rx="4" ry="16" fill="#f3ecd4" opacity="0.50" filter="url(#b3)" transform="rotate(-3 1398 785)"/>
<ellipse cx="1398" cy="785" rx="1.6" ry="11" fill="#fbf6e4" opacity="0.40" filter="url(#b1)" transform="rotate(-3 1398 785)"/>
<circle cx="772" cy="553" r="7" fill="#2a8a2a"/>
<circle cx="895" cy="503" r="4" fill="#2a8a2a"/>
<circle cx="1003" cy="805" r="5" fill="#2a8a2a"/>
<circle cx="1068" cy="800" r="6" fill="#2a8a2a"/>
<circle cx="1145" cy="813" r="7" fill="#2a8a2a"/>
<circle cx="1138" cy="648" r="5" fill="#2a8a2a"/>
<circle cx="1265" cy="650" r="4" fill="#2a8a2a"/>
<circle cx="1262" cy="797" r="6" fill="#2a8a2a"/>
<circle cx="848" cy="782" r="3" fill="#2a8a2a"/>
<circle cx="1365" cy="810" r="3" fill="#2a8a2a"/>
<rect x="1543" y="733" width="13" height="43" fill="#3aa63a" transform="rotate(-4 1549 754)"/>
<path d="M1588 648 L1600 641" stroke="#3aa63a" stroke-width="3"/>
</svg><!--V1-->
   <div class="vbtn on" style="top:95px">
    <div class="abs" style="left:11px;top:11px;width:33px;height:33px;border-radius:50%;background:conic-gradient(from 0deg,#3ad05a 0deg,#35c86a 50deg,#2e86e8 110deg,#3a6ff0 170deg,#a04ae8 215deg,#e8405a 250deg,#f04a3a 290deg,#f39a30 330deg,#9ad040 350deg,#3ad05a 360deg)"></div>
    <div class="abs" style="left:11px;top:11px;width:33px;height:33px;border-radius:50%;background:radial-gradient(circle at 50% 50%,#fff 0,rgba(255,255,255,.85) 12%,rgba(255,255,255,0) 48%)"></div>
   </div>
   <div class="vbtn" style="top:161.700px">
    <svg class="abs" style="left:9px;top:8px" width="40" height="40" viewBox="0 0 40 40"><defs><linearGradient id="tw" x1="0" y1="0" x2="0" y2="1"><stop offset="0" stop-color="#fff"/><stop offset="1" stop-color="#e4e4e4"/></linearGradient></defs><path d="M4 12 C4 6 9 5 14 7.500 C18 9.500 21 5 26 6 C31 7 31 13 30 19 C29 27 26 32 18 32.500 C10 33 5 27 4 19 Z" fill="url(#tw)" stroke="#b5b5b5" stroke-width="1.800"/><path d="M24 8 L26.500 15 L34 14 L28.500 19 L31.500 26.500 L24.500 21.500 L17 24 L21 17.500 L15.500 13 L22.500 13.500 Z" fill="#f2a832" transform="rotate(12 25 17)"/><path d="M31 2.500 L32 5 L34.500 5.300 L32.600 6.800 L33.300 9.300 L31 7.900 L28.800 9.300 L29.500 6.800 L27.500 5.300 L30 5 Z" fill="#f5b850"/><path d="M35 18 L36 20.500 L38.500 21 L36.500 22.500 L37 25 L35 23.500 L33 25 L33.600 22.500 L31.500 21 L34 20.500 Z" fill="#f5b850"/></svg>
   </div>
   <div class="vbtn on" style="top:228.300px">
    <svg class="abs" style="left:4px;top:4px" width="48" height="48" viewBox="0 0 48 48"><circle cx="24" cy="27" r="11.500" fill="none" stroke="#dfe8fa" stroke-width="2.200" stroke-dasharray="1.600 1.600" opacity=".9"/><path d="M24 17.500 L32 21.500 V31 L24 35.500 L16 31 V21.500 Z" fill="#fff"/><path d="M24 26 V35.500 M24 26 L32 21.500 M24 26 L16 21.500" stroke="#9fb5e2" stroke-width="1.300" fill="none"/><path d="M23 13 L26 6" stroke="#3fd46a" stroke-width="2"/><path d="M22 5 H27 L23 9.500 H28" fill="none" stroke="#3fd46a" stroke-width="1.600"/><path d="M14 33 L7 38" stroke="#3a6ff0" stroke-width="2"/><path d="M7 31 L9.500 35 L12 31 M9.500 35 V39.500" fill="none" stroke="#3a6ff0" stroke-width="1.600"/><path d="M34 33 L41 37" stroke="#e84a4a" stroke-width="2"/><path d="M35 36 L41 42 M41 36 L35 42" fill="none" stroke="#e84a4a" stroke-width="1.600"/></svg>
   </div>
   <div class="vbtn" style="top:295px">
    <svg class="abs" style="left:10px;top:10px" width="37" height="37" viewBox="0 0 37 37"><rect x="1.500" y="1.500" width="34" height="34" rx="1.500" fill="none" stroke="#555" stroke-width="2.400"/><g fill="none" stroke="#555" stroke-width="2.200"><path d="M8 13 V8 H13 M8.500 8.500 L14.500 14.500"/><path d="M29 13 V8 H24 M28.500 8.500 L22.500 14.500"/><path d="M8 24 V29 H13 M8.500 28.500 L14.500 22.500"/><path d="M29 24 V29 H24 M28.500 28.500 L22.500 22.500"/></g></svg>
   </div>
   <svg class="abs" style="left:1078px;top:366px;opacity:.8" width="52" height="48" viewBox="0 0 52 48"><path d="M12 12 C12 5 18 3 22 6 C25 8 28 3 33 5 C38 7 37 13 36 18 L12 18 Z" fill="#f2f2f2" stroke="#d0d0d0" stroke-width="1"/><path d="M4 14 C8 20 16 24 25 24 C34 24 41 20 44 13 L46 26 C42 34 34 37 25 37 C15 37 7 34 3 27 Z" fill="#9a9a9a"/><circle cx="8" cy="15" r="2.200" fill="#e8e8e8"/><circle cx="25" cy="24" r="2.200" fill="#e8e8e8"/><circle cx="43" cy="14" r="2.200" fill="#e8e8e8"/><path d="M33 28 L42 26 L49 35 L44 42 L37 37 Z" fill="#666" stroke="#f0f0f0" stroke-width="1.200"/><circle cx="42" cy="35" r="2" fill="#eee"/></svg>
</div>
 </div>
</div>
</body>
</html>
